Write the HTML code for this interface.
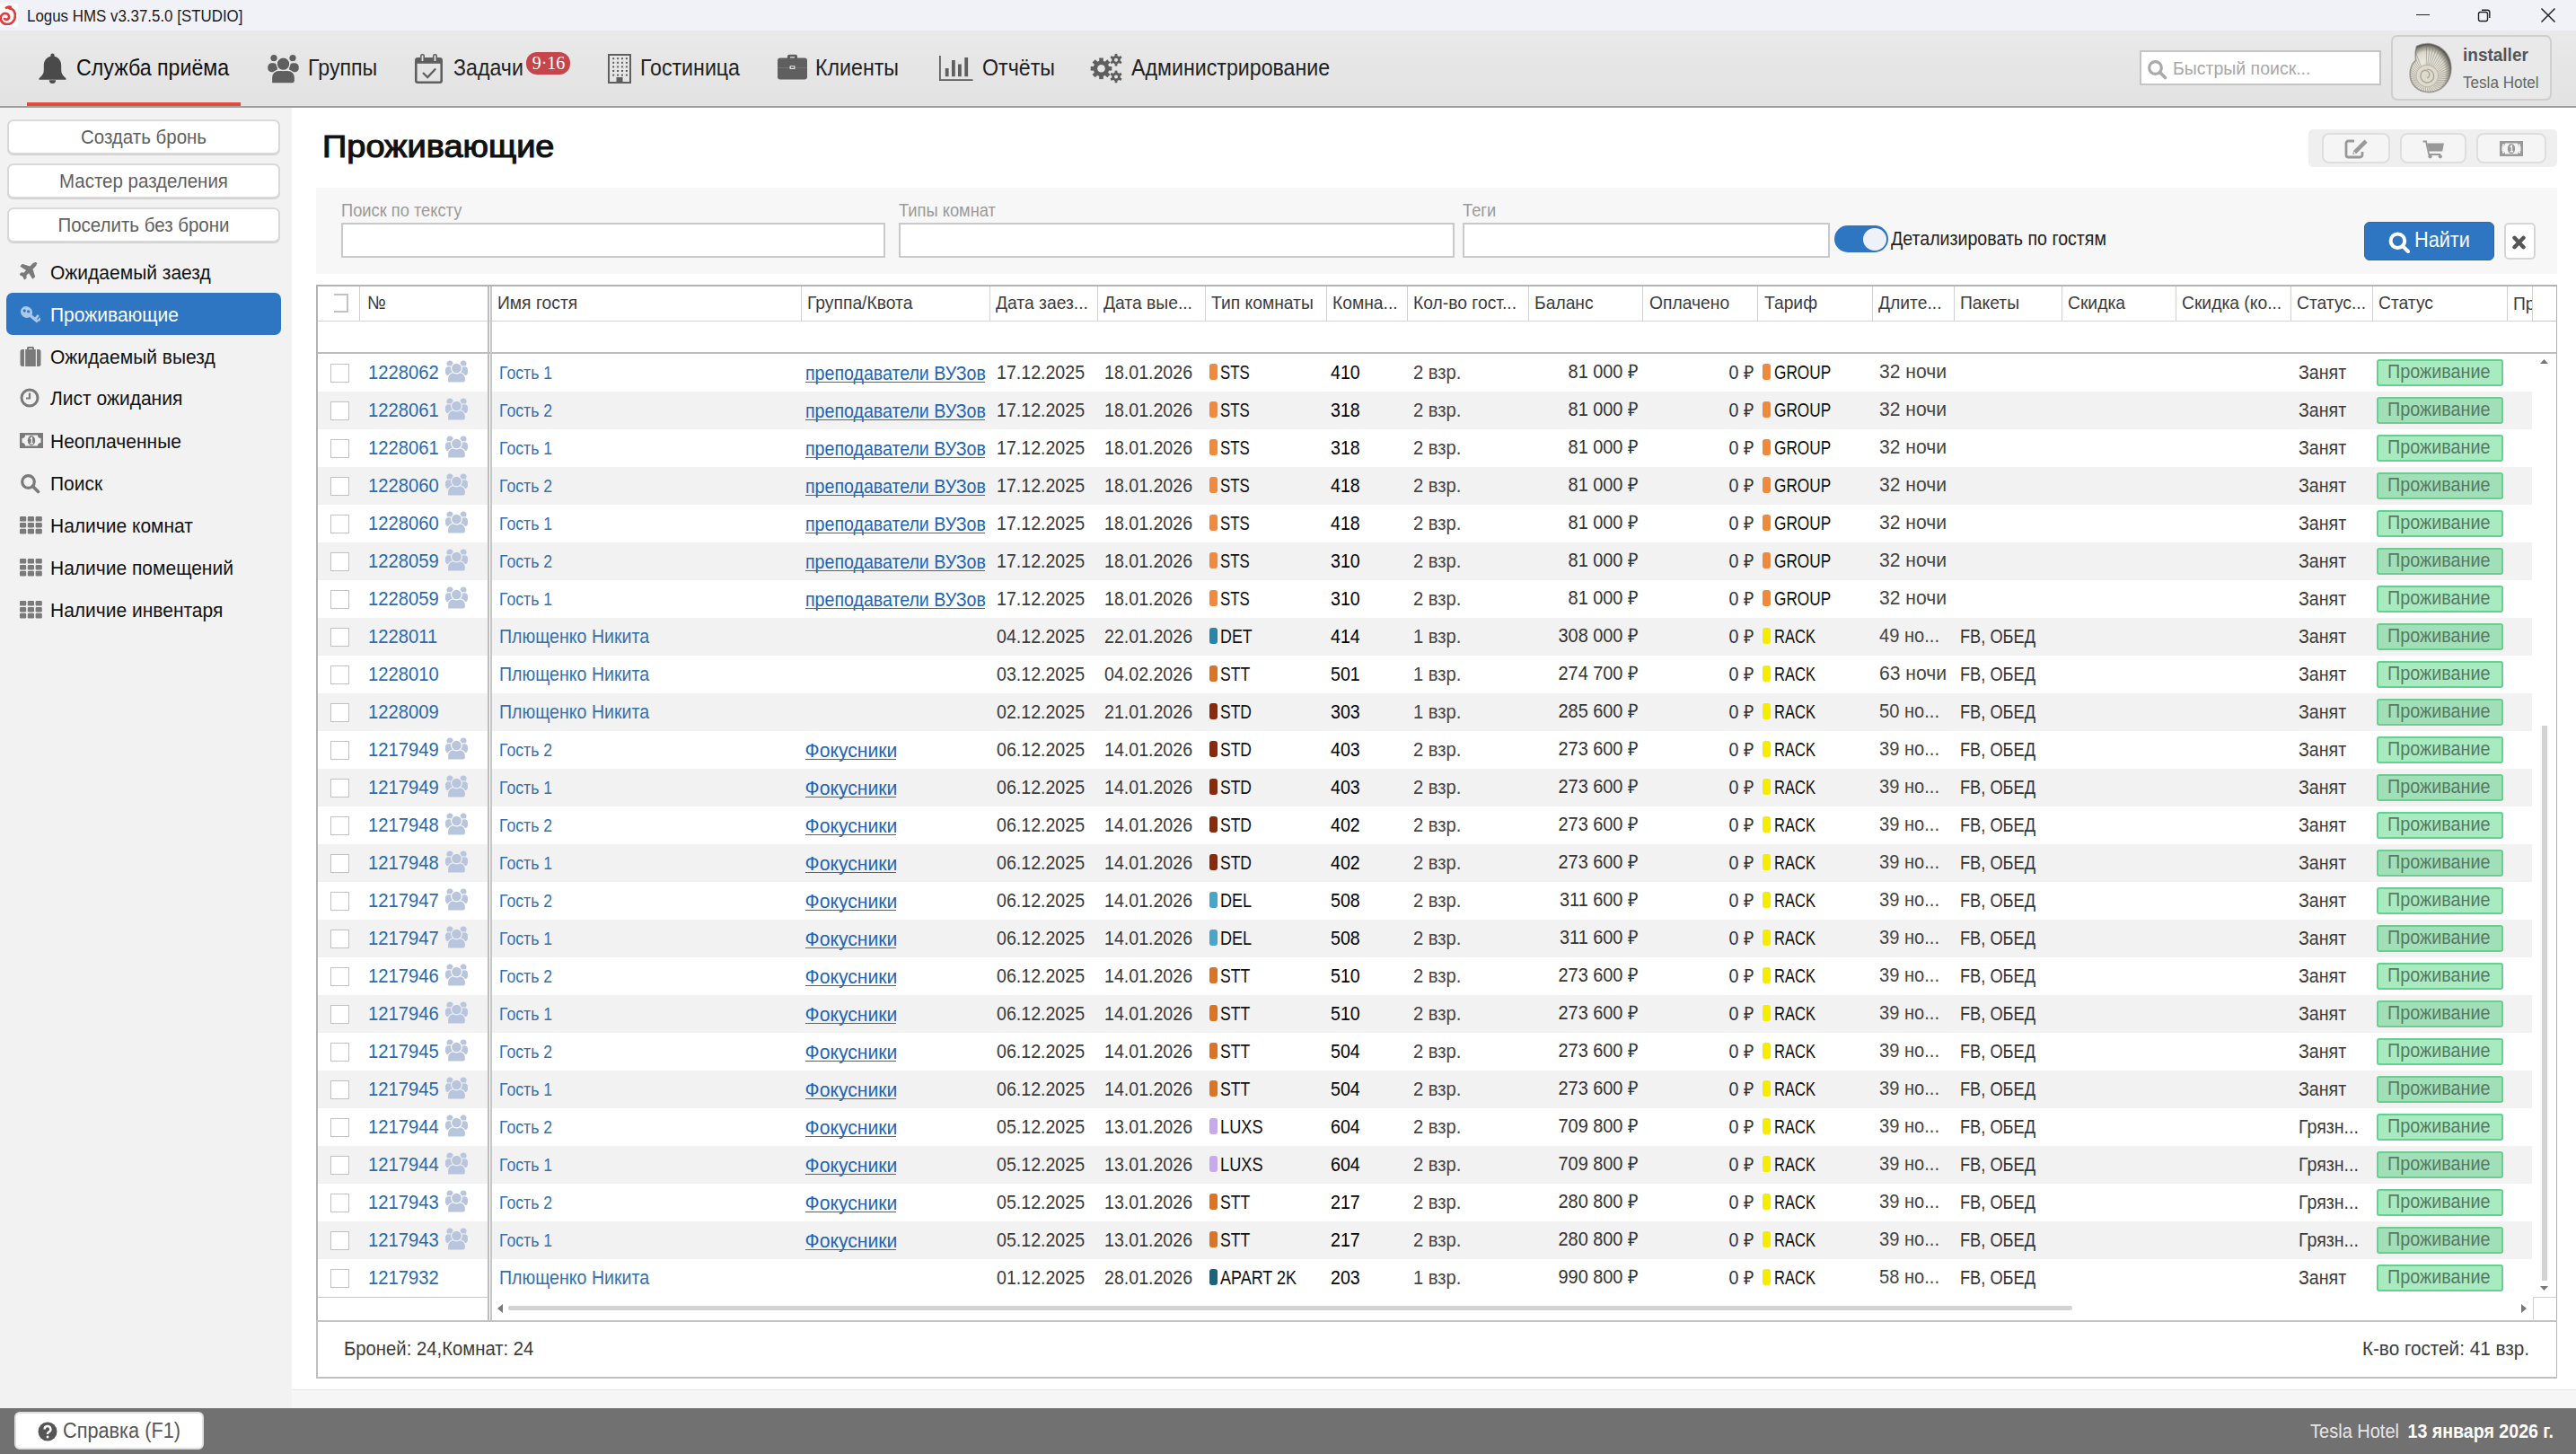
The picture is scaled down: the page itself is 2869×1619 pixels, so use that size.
<!DOCTYPE html>
<html><head><meta charset="utf-8"><title>Logus HMS</title>
<style>
html,body{margin:0;padding:0;}
body{width:2869px;height:1619px;position:relative;overflow:hidden;background:#fff;font-family:"Liberation Sans",sans-serif;}
.t{position:absolute;white-space:nowrap;line-height:1;}
.b{position:absolute;}
</style></head><body>
<div class="b" style="left:0.0px;top:0.0px;width:2869.0px;height:34.0px;background:#f0f2f8"></div>
<div class="b" style="left:0.0px;top:4.0px;width:20.0px;height:26.0px;background:#fbfbfd"></div>
<svg class="b" style="left:0.0px;top:6.0px" width="18" height="22" viewBox="0 0 18 22"><path d="M6 3.2c2-1.6 4.2-2 5.5-1.5l-.6 1.5c3.5.8 6 4 6 8.3 0 5.5-4 9.5-9 9.5C3.6 21 .8 18 .8 14.2c0-3 2.3-5.3 5.2-5.3 2.3 0 4 1.7 4 3.9 0 1.7-1.3 3-2.9 3-1.2 0-2.1-.9-2.1-2" fill="none" stroke="#e03a3a" stroke-width="2.6"/><path d="M5.5 2.5c2.8-1.5 6.5-1.2 8.2.6l-2.2 1.7z" fill="#e03a3a"/></svg>
<div class="t" style="left:29.5px;top:8.5px;font-size:18.25px;color:#1a1a1a;font-weight:400;transform:scaleX(0.9259);transform-origin:0 0;">Logus HMS v3.37.5.0 [STUDIO]</div>
<div class="b" style="left:2691.0px;top:16.0px;width:15.0px;height:1.0px;background:#222"></div>
<svg class="b" style="left:2758.0px;top:8.0px" width="20" height="18" viewBox="0 0 20 18"><rect x="2.5" y="5.5" width="10" height="10" rx="2" fill="none" stroke="#222" stroke-width="1.4"/><path d="M6 3.2h6.5a2.3 2.3 0 0 1 2.3 2.3V12" fill="none" stroke="#222" stroke-width="1.4"/></svg>
<svg class="b" style="left:2829.0px;top:8.0px" width="18" height="18" viewBox="0 0 18 18"><path d="M1.5 1.5L16.5 16.5M16.5 1.5L1.5 16.5" stroke="#222" stroke-width="1.5"/></svg>
<div class="b" style="left:0.0px;top:34.0px;width:2869.0px;height:84.0px;background:linear-gradient(#eaeaea,#e6e6e6 40%,#e3e3e3)"></div>
<div class="b" style="left:0.0px;top:118.0px;width:2869.0px;height:2.0px;background:#9f9f9f"></div>
<div class="b" style="left:30.0px;top:114.0px;width:238.0px;height:4.0px;background:#e24b3b"></div>
<svg class="b" style="left:43.0px;top:59.0px" width="31" height="34" viewBox="0 0 31 34"><path d="M15.5 0.5c1.2 0 2.1.9 2.1 2.1v1.2c4.6 1 7.6 5 7.6 10.2v5.6c0 3.2 1.7 5.6 5.3 8.6v1.6H0.5v-1.6c3.6-3 5.3-5.4 5.3-8.6v-5.6c0-5.2 3-9.2 7.6-10.2V2.6c0-1.2.9-2.1 2.1-2.1z" fill="#4a4a4a"/><path d="M11.8 30.2a3.7 3.7 0 0 0 7.4 0z" fill="#4a4a4a"/></svg>
<div class="t" style="left:85.0px;top:63.4px;font-size:25.06px;color:#111;font-weight:400;transform:scaleX(0.9259);transform-origin:0 0;">Служба приёма</div>
<svg class="b" style="left:297.0px;top:60.0px" width="37" height="34" viewBox="0 0 37 34"><g fill="#5f5f5f" stroke="#e6e6e6" stroke-width="1.3"><circle cx="8" cy="4.6" r="4.3"/><circle cx="29" cy="4.6" r="4.3"/><rect x="0.6" y="9.5" width="12" height="11.5" rx="5"/><rect x="24.4" y="9.5" width="12" height="11.5" rx="5"/><path d="M5.5 33V26c0-4.6 3.6-7.6 8-7.6h10c4.4 0 8 3 8 7.6v4c0 1.7-1.3 3-3 3z"/><circle cx="18.5" cy="11.2" r="7.3"/></g></svg>
<div class="t" style="left:342.5px;top:63.4px;font-size:25.06px;color:#222;font-weight:400;transform:scaleX(0.9259);transform-origin:0 0;">Группы</div>
<svg class="b" style="left:462.0px;top:59.0px" width="31" height="34" viewBox="0 0 31 34"><rect x="1.3" y="6.3" width="28.4" height="26.4" rx="2" fill="none" stroke="#5f5f5f" stroke-width="2.6"/><rect x="1.3" y="6.3" width="28.4" height="5.5" fill="#5f5f5f"/><rect x="6" y="1" width="5" height="9.5" rx="2.2" fill="#5f5f5f"/><rect x="20" y="1" width="5" height="9.5" rx="2.2" fill="#5f5f5f"/><rect x="7.6" y="2.6" width="1.8" height="6.4" fill="#e6e6e6"/><rect x="21.6" y="2.6" width="1.8" height="6.4" fill="#e6e6e6"/><path d="M9 22l5.2 5 9-9.5" fill="none" stroke="#5f5f5f" stroke-width="2.3"/></svg>
<div class="t" style="left:504.6px;top:63.4px;font-size:25.06px;color:#222;font-weight:400;transform:scaleX(0.9259);transform-origin:0 0;">Задачи</div>
<div class="b" style="left:586.0px;top:58.2px;width:49.0px;height:24.4px;background:#c6454a;border-radius:12px"></div>
<div class="t" style="left:580.5px;width:60px;text-align:center;top:59.5px;font-size:21.60px;color:#fff;font-weight:400;font-family:'Liberation Serif',serif;transform:scaleX(0.9259);transform-origin:50% 0;">9·16</div>
<svg class="b" style="left:677.0px;top:60.0px" width="26" height="33" viewBox="0 0 26 33"><path d="M1 1h24v31H1z" fill="none" stroke="#5f5f5f" stroke-width="2"/><rect x="5.2" y="4.2" width="2" height="2" fill="#5f5f5f"/><rect x="10.1" y="4.2" width="2" height="2" fill="#5f5f5f"/><rect x="15.0" y="4.2" width="2" height="2" fill="#5f5f5f"/><rect x="19.9" y="4.2" width="2" height="2" fill="#5f5f5f"/><rect x="5.2" y="8.8" width="2" height="2" fill="#5f5f5f"/><rect x="10.1" y="8.8" width="2" height="2" fill="#5f5f5f"/><rect x="15.0" y="8.8" width="2" height="2" fill="#5f5f5f"/><rect x="19.9" y="8.8" width="2" height="2" fill="#5f5f5f"/><rect x="5.2" y="13.4" width="2" height="2" fill="#5f5f5f"/><rect x="10.1" y="13.4" width="2" height="2" fill="#5f5f5f"/><rect x="15.0" y="13.4" width="2" height="2" fill="#5f5f5f"/><rect x="19.9" y="13.4" width="2" height="2" fill="#5f5f5f"/><rect x="5.2" y="18.0" width="2" height="2" fill="#5f5f5f"/><rect x="10.1" y="18.0" width="2" height="2" fill="#5f5f5f"/><rect x="15.0" y="18.0" width="2" height="2" fill="#5f5f5f"/><rect x="19.9" y="18.0" width="2" height="2" fill="#5f5f5f"/><rect x="5.2" y="22.6" width="2" height="2" fill="#5f5f5f"/><rect x="10.1" y="22.6" width="2" height="2" fill="#5f5f5f"/><rect x="15.0" y="22.6" width="2" height="2" fill="#5f5f5f"/><rect x="19.9" y="22.6" width="2" height="2" fill="#5f5f5f"/><rect x="9.5" y="26" width="7" height="6" fill="#5f5f5f"/></svg>
<div class="t" style="left:713.0px;top:63.4px;font-size:25.06px;color:#222;font-weight:400;transform:scaleX(0.9259);transform-origin:0 0;">Гостиница</div>
<svg class="b" style="left:866.0px;top:60.0px" width="33" height="29" viewBox="0 0 33 29"><path d="M11 5.5V2.6C11 1.5 11.9.8 13 .8h7c1.1 0 2 .7 2 1.8v2.9h-3V3.3h-5v2.2z" fill="#5f5f5f"/><rect x="0" y="4.6" width="33" height="24" rx="3" fill="#5f5f5f"/><path d="M0 15.5h33" stroke="#777" stroke-width="0.8"/><rect x="13.5" y="13.3" width="6" height="3.6" rx="0.6" fill="#e6e6e6"/><rect x="14.8" y="14.3" width="3.4" height="1.6" fill="#5f5f5f"/></svg>
<div class="t" style="left:908.0px;top:63.4px;font-size:25.06px;color:#222;font-weight:400;transform:scaleX(0.9259);transform-origin:0 0;">Клиенты</div>
<svg class="b" style="left:1046.0px;top:62.0px" width="38" height="28" viewBox="0 0 38 28"><g fill="#5f5f5f"><rect x="0" y="0" width="1.8" height="28"/><rect x="0" y="26.2" width="37.5" height="1.8"/><rect x="6.8" y="14" width="3.8" height="9.2"/><rect x="14" y="5" width="3.8" height="18.2"/><rect x="21" y="9.5" width="3.8" height="13.7"/><rect x="28.3" y="2" width="3.8" height="21.2"/></g></svg>
<div class="t" style="left:1093.8px;top:63.4px;font-size:25.06px;color:#222;font-weight:400;transform:scaleX(0.9259);transform-origin:0 0;">Отчёты</div>
<svg class="b" style="left:1213.0px;top:58.0px" width="38" height="36" viewBox="0 0 38 36"><circle cx="13.5" cy="18.3" r="8.8" fill="#5f5f5f"/><rect x="11.2" y="6.5" width="4.6" height="5" fill="#5f5f5f" transform="rotate(0.0 13.5 18.3)"/><rect x="11.2" y="6.5" width="4.6" height="5" fill="#5f5f5f" transform="rotate(45.0 13.5 18.3)"/><rect x="11.2" y="6.5" width="4.6" height="5" fill="#5f5f5f" transform="rotate(90.0 13.5 18.3)"/><rect x="11.2" y="6.5" width="4.6" height="5" fill="#5f5f5f" transform="rotate(135.0 13.5 18.3)"/><rect x="11.2" y="6.5" width="4.6" height="5" fill="#5f5f5f" transform="rotate(180.0 13.5 18.3)"/><rect x="11.2" y="6.5" width="4.6" height="5" fill="#5f5f5f" transform="rotate(225.0 13.5 18.3)"/><rect x="11.2" y="6.5" width="4.6" height="5" fill="#5f5f5f" transform="rotate(270.0 13.5 18.3)"/><rect x="11.2" y="6.5" width="4.6" height="5" fill="#5f5f5f" transform="rotate(315.0 13.5 18.3)"/><circle cx="13.5" cy="18.3" r="4.3" fill="#e6e6e6"/><circle cx="30" cy="8.7" r="4.8" fill="#5f5f5f"/><rect x="28.6" y="1.8999999999999995" width="2.8" height="4" fill="#5f5f5f" transform="rotate(0.0 30 8.7)"/><rect x="28.6" y="1.8999999999999995" width="2.8" height="4" fill="#5f5f5f" transform="rotate(60.0 30 8.7)"/><rect x="28.6" y="1.8999999999999995" width="2.8" height="4" fill="#5f5f5f" transform="rotate(120.0 30 8.7)"/><rect x="28.6" y="1.8999999999999995" width="2.8" height="4" fill="#5f5f5f" transform="rotate(180.0 30 8.7)"/><rect x="28.6" y="1.8999999999999995" width="2.8" height="4" fill="#5f5f5f" transform="rotate(240.0 30 8.7)"/><rect x="28.6" y="1.8999999999999995" width="2.8" height="4" fill="#5f5f5f" transform="rotate(300.0 30 8.7)"/><circle cx="30" cy="8.7" r="2" fill="#e6e6e6"/><circle cx="30" cy="27.4" r="4.8" fill="#5f5f5f"/><rect x="28.6" y="20.599999999999998" width="2.8" height="4" fill="#5f5f5f" transform="rotate(0.0 30 27.4)"/><rect x="28.6" y="20.599999999999998" width="2.8" height="4" fill="#5f5f5f" transform="rotate(60.0 30 27.4)"/><rect x="28.6" y="20.599999999999998" width="2.8" height="4" fill="#5f5f5f" transform="rotate(120.0 30 27.4)"/><rect x="28.6" y="20.599999999999998" width="2.8" height="4" fill="#5f5f5f" transform="rotate(180.0 30 27.4)"/><rect x="28.6" y="20.599999999999998" width="2.8" height="4" fill="#5f5f5f" transform="rotate(240.0 30 27.4)"/><rect x="28.6" y="20.599999999999998" width="2.8" height="4" fill="#5f5f5f" transform="rotate(300.0 30 27.4)"/><circle cx="30" cy="27.4" r="2" fill="#e6e6e6"/></svg>
<div class="t" style="left:1259.5px;top:63.4px;font-size:25.06px;color:#222;font-weight:400;transform:scaleX(0.9259);transform-origin:0 0;">Администрирование</div>
<div class="b" style="left:2383.0px;top:56.0px;width:269.0px;height:39.0px;background:#fff;border:2px solid #c4c4c4;box-sizing:border-box"></div>
<svg class="b" style="left:2391.0px;top:66.0px" width="23" height="23" viewBox="0 0 23 23"><circle cx="9.5" cy="9.5" r="6.8" fill="none" stroke="#aaa" stroke-width="3.2"/><path d="M14.5 14.5l6 6" stroke="#aaa" stroke-width="3.6" stroke-linecap="round"/></svg>
<div class="t" style="left:2420.0px;top:65.0px;font-size:21.06px;color:#a8a8a8;font-weight:400;transform:scaleX(0.9259);transform-origin:0 0;">Быстрый поиск...</div>
<div class="b" style="left:2663.0px;top:39.0px;width:179.0px;height:73.0px;background:#e9e9e9;border:2px solid #cfcfcf;border-radius:7px;box-sizing:border-box"></div>
<svg class="b" style="left:2682.0px;top:45.0px" width="51" height="60" viewBox="0 0 48 56"><defs><radialGradient id="ag" cx="42%" cy="60%" r="60%"><stop offset="0" stop-color="#d6d1c3"/><stop offset="0.4" stop-color="#ece9df"/><stop offset="0.72" stop-color="#dcd9cf"/><stop offset="0.9" stop-color="#8f8c84"/><stop offset="1" stop-color="#4a4843"/></radialGradient><clipPath id="ac"><path d="M9 6c6-3 14-3.5 20-1 10 4 16 13 16 24 0 14-10 25-23 25C10 54 2 46 2 35c0-6 2-11 6-14.5C7.5 15 7.5 10 9 6z"/></clipPath></defs><path d="M9 6c6-3 14-3.5 20-1 10 4 16 13 16 24 0 14-10 25-23 25C10 54 2 46 2 35c0-6 2-11 6-14.5C7.5 15 7.5 10 9 6z" fill="url(#ag)" stroke="#6a675f" stroke-width="1.6" stroke-opacity="0.55"/><g clip-path="url(#ac)"><line x1="19.0" y1="25.0" x2="19.4" y2="3.1" stroke="#7d7a70" stroke-width="0.9" opacity="0.5"/><line x1="20.5" y1="25.0" x2="23.3" y2="3.0" stroke="#7d7a70" stroke-width="0.9" opacity="0.5"/><line x1="22.0" y1="25.2" x2="27.1" y2="3.4" stroke="#7d7a70" stroke-width="0.9" opacity="0.5"/><line x1="23.5" y1="25.5" x2="30.9" y2="4.2" stroke="#7d7a70" stroke-width="0.9" opacity="0.5"/><line x1="25.0" y1="26.1" x2="34.5" y2="5.5" stroke="#7d7a70" stroke-width="0.9" opacity="0.5"/><line x1="26.4" y1="26.8" x2="37.9" y2="7.2" stroke="#7d7a70" stroke-width="0.9" opacity="0.5"/><line x1="27.6" y1="27.7" x2="41.0" y2="9.3" stroke="#7d7a70" stroke-width="0.9" opacity="0.5"/><line x1="28.7" y1="28.8" x2="43.8" y2="11.8" stroke="#7d7a70" stroke-width="0.9" opacity="0.5"/><line x1="29.7" y1="30.0" x2="46.3" y2="14.6" stroke="#7d7a70" stroke-width="0.9" opacity="0.5"/><line x1="30.5" y1="31.3" x2="48.4" y2="17.6" stroke="#7d7a70" stroke-width="0.9" opacity="0.5"/><line x1="31.2" y1="32.7" x2="50.0" y2="20.9" stroke="#7d7a70" stroke-width="0.9" opacity="0.5"/><line x1="31.7" y1="34.2" x2="51.1" y2="24.4" stroke="#7d7a70" stroke-width="0.9" opacity="0.5"/><line x1="31.9" y1="35.7" x2="51.8" y2="27.9" stroke="#7d7a70" stroke-width="0.9" opacity="0.5"/><line x1="32.0" y1="37.2" x2="52.0" y2="31.5" stroke="#7d7a70" stroke-width="0.9" opacity="0.5"/><line x1="31.9" y1="38.8" x2="51.7" y2="35.1" stroke="#7d7a70" stroke-width="0.9" opacity="0.5"/><line x1="31.5" y1="40.3" x2="50.9" y2="38.7" stroke="#7d7a70" stroke-width="0.9" opacity="0.5"/><line x1="31.0" y1="41.7" x2="49.6" y2="42.1" stroke="#7d7a70" stroke-width="0.9" opacity="0.5"/><line x1="30.3" y1="43.1" x2="47.8" y2="45.3" stroke="#7d7a70" stroke-width="0.9" opacity="0.5"/><line x1="29.5" y1="44.4" x2="45.6" y2="48.3" stroke="#7d7a70" stroke-width="0.9" opacity="0.5"/><line x1="28.4" y1="45.5" x2="43.1" y2="50.9" stroke="#7d7a70" stroke-width="0.9" opacity="0.5"/><line x1="27.3" y1="46.6" x2="40.1" y2="53.3" stroke="#7d7a70" stroke-width="0.9" opacity="0.5"/><line x1="26.0" y1="47.4" x2="36.9" y2="55.3" stroke="#7d7a70" stroke-width="0.9" opacity="0.5"/><line x1="24.6" y1="48.1" x2="33.4" y2="56.9" stroke="#7d7a70" stroke-width="0.9" opacity="0.5"/><line x1="23.1" y1="48.6" x2="29.8" y2="58.0" stroke="#7d7a70" stroke-width="0.9" opacity="0.5"/><line x1="21.6" y1="48.9" x2="26.0" y2="58.8" stroke="#7d7a70" stroke-width="0.9" opacity="0.5"/><line x1="20.0" y1="49.0" x2="22.1" y2="59.0" stroke="#7d7a70" stroke-width="0.9" opacity="0.5"/><line x1="18.5" y1="48.9" x2="18.3" y2="58.8" stroke="#7d7a70" stroke-width="0.9" opacity="0.5"/><line x1="17.0" y1="48.6" x2="14.5" y2="58.1" stroke="#7d7a70" stroke-width="0.9" opacity="0.5"/><line x1="15.5" y1="48.1" x2="10.8" y2="57.0" stroke="#7d7a70" stroke-width="0.9" opacity="0.5"/><line x1="14.1" y1="47.5" x2="7.3" y2="55.4" stroke="#7d7a70" stroke-width="0.9" opacity="0.5"/><line x1="12.8" y1="46.6" x2="4.1" y2="53.4" stroke="#7d7a70" stroke-width="0.9" opacity="0.5"/><line x1="11.6" y1="45.6" x2="1.1" y2="51.1" stroke="#7d7a70" stroke-width="0.9" opacity="0.5"/><line x1="10.6" y1="44.5" x2="-1.5" y2="48.4" stroke="#7d7a70" stroke-width="0.9" opacity="0.5"/><line x1="9.7" y1="43.2" x2="-3.7" y2="45.5" stroke="#7d7a70" stroke-width="0.9" opacity="0.5"/><line x1="9.0" y1="41.8" x2="-5.5" y2="42.3" stroke="#7d7a70" stroke-width="0.9" opacity="0.5"/><line x1="8.5" y1="40.4" x2="-6.8" y2="38.9" stroke="#7d7a70" stroke-width="0.9" opacity="0.5"/><line x1="8.1" y1="38.9" x2="-7.6" y2="35.3" stroke="#7d7a70" stroke-width="0.9" opacity="0.5"/><line x1="8.0" y1="37.3" x2="-8.0" y2="31.7" stroke="#7d7a70" stroke-width="0.9" opacity="0.5"/><line x1="8.1" y1="35.8" x2="-7.8" y2="28.1" stroke="#7d7a70" stroke-width="0.9" opacity="0.5"/><line x1="8.3" y1="34.2" x2="-7.2" y2="24.6" stroke="#7d7a70" stroke-width="0.9" opacity="0.5"/><line x1="8.8" y1="32.8" x2="-6.1" y2="21.1" stroke="#7d7a70" stroke-width="0.9" opacity="0.5"/><line x1="9.4" y1="31.4" x2="-4.5" y2="17.8" stroke="#7d7a70" stroke-width="0.9" opacity="0.5"/><line x1="10.2" y1="30.0" x2="-2.4" y2="14.8" stroke="#7d7a70" stroke-width="0.9" opacity="0.5"/><line x1="11.2" y1="28.8" x2="-0.0" y2="12.0" stroke="#7d7a70" stroke-width="0.9" opacity="0.5"/><line x1="12.3" y1="27.8" x2="2.8" y2="9.5" stroke="#7d7a70" stroke-width="0.9" opacity="0.5"/><line x1="13.6" y1="26.9" x2="5.9" y2="7.4" stroke="#7d7a70" stroke-width="0.9" opacity="0.5"/></g><circle cx="20" cy="37" r="11.5" fill="#dedacd" opacity="0.9"/><circle cx="20" cy="37" r="11.5" fill="none" stroke="#b9b5a8" stroke-width="1"/><path d="M20 30a7 7 0 1 1-6.5 4.5a4.5 4.5 0 1 1 6.5 5" fill="none" stroke="#a9a598" stroke-width="1.3"/></svg>
<div class="t" style="left:2743.0px;top:51.1px;font-size:20.52px;color:#555;font-weight:700;transform:scaleX(0.9259);transform-origin:0 0;">installer</div>
<div class="t" style="left:2743.0px;top:82.7px;font-size:18.47px;color:#666;font-weight:400;transform:scaleX(0.9259);transform-origin:0 0;">Tesla Hotel</div>
<div class="b" style="left:0.0px;top:120.0px;width:325.0px;height:1448.0px;background:#f2f2f2"></div>
<div class="b" style="left:8.0px;top:132.5px;width:304.0px;height:39.0px;background:#fff;border:2px solid #d9d9d9;border-radius:7px;box-sizing:border-box;box-shadow:0 1px 0 #cfcfcf"></div>
<div class="t" style="left:10.0px;width:300px;text-align:center;top:141.9px;font-size:22.14px;color:#5f5f5f;font-weight:400;transform:scaleX(0.9259);transform-origin:50% 0;">Создать бронь</div>
<div class="b" style="left:8.0px;top:181.5px;width:304.0px;height:39.0px;background:#fff;border:2px solid #d9d9d9;border-radius:7px;box-sizing:border-box;box-shadow:0 1px 0 #cfcfcf"></div>
<div class="t" style="left:10.0px;width:300px;text-align:center;top:190.9px;font-size:22.14px;color:#5f5f5f;font-weight:400;transform:scaleX(0.9259);transform-origin:50% 0;">Мастер разделения</div>
<div class="b" style="left:8.0px;top:231.0px;width:304.0px;height:39.0px;background:#fff;border:2px solid #d9d9d9;border-radius:7px;box-sizing:border-box;box-shadow:0 1px 0 #cfcfcf"></div>
<div class="t" style="left:10.0px;width:300px;text-align:center;top:240.3px;font-size:22.14px;color:#5f5f5f;font-weight:400;transform:scaleX(0.9259);transform-origin:50% 0;">Поселить без брони</div>
<div class="b" style="left:7.0px;top:326.0px;width:306.0px;height:47.0px;background:#2e76c1;border-radius:7px"></div>
<div class="t" style="left:55.7px;top:292.3px;font-size:22.68px;color:#111;font-weight:400;transform:scaleX(0.9259);transform-origin:0 0;">Ожидаемый заезд</div>
<svg class="b" style="left:22.0px;top:292.0px" width="20" height="20" viewBox="0 0 20 20"><path d="M18.6 1.4c-.9-.9-2.6-.5-3.8.7L11.6 5.3 3.2 2.6 1.3 4.5l6.9 4.3-3.5 3.6-2.6-.4L.4 13.7l3.4 1.6 1.6 3.4L7 17l-.4-2.6 3.6-3.5 4.3 6.9 1.9-1.9-2.7-8.4 3.2-3.2c1.2-1.2 1.6-2.9.7-3.8z" fill="#7a7a7a" stroke="#7a7a7a" stroke-width="1.4" stroke-linejoin="round"/></svg>
<div class="t" style="left:55.7px;top:338.8px;font-size:22.68px;color:#fff;font-weight:400;transform:scaleX(0.9259);transform-origin:0 0;">Проживающие</div>
<svg class="b" style="left:21.0px;top:338.5px" width="24" height="24" viewBox="0 0 24 24"><g transform="rotate(40 8.5 8.5)"><ellipse cx="8.5" cy="8.5" rx="6.8" ry="6.3" fill="#a9c8ea"/><rect x="13" y="6.9" width="12" height="3.4" fill="#a9c8ea"/><rect x="19.5" y="2.6" width="2.8" height="5" fill="#a9c8ea"/><rect x="23.5" y="3.6" width="2.6" height="4" fill="#a9c8ea"/><circle cx="5.8" cy="8.8" r="1.6" fill="#2e76c1"/><circle cx="9.8" cy="6.6" r="1.6" fill="#2e76c1"/></g></svg>
<div class="t" style="left:55.7px;top:385.8px;font-size:22.68px;color:#111;font-weight:400;transform:scaleX(0.9259);transform-origin:0 0;">Ожидаемый выезд</div>
<svg class="b" style="left:22.0px;top:384.5px" width="24" height="23" viewBox="0 0 24 23"><path d="M8 4V2.5C8 1.5 8.8 1 9.5 1h5c.8 0 1.5.5 1.5 1.5V4h-2V3h-4v1z" fill="#7a7a7a"/><rect x="0.5" y="4" width="23" height="19" rx="2.5" fill="#7a7a7a"/><rect x="5" y="4" width="1.2" height="19" fill="#f2f2f2"/><rect x="17.8" y="4" width="1.2" height="19" fill="#f2f2f2"/></svg>
<div class="t" style="left:55.7px;top:432.3px;font-size:22.68px;color:#111;font-weight:400;transform:scaleX(0.9259);transform-origin:0 0;">Лист ожидания</div>
<svg class="b" style="left:22.0px;top:432.0px" width="22" height="22" viewBox="0 0 22 22"><circle cx="11" cy="11" r="9" fill="none" stroke="#7a7a7a" stroke-width="3"/><path d="M11 5.5V11.5H7" fill="none" stroke="#7a7a7a" stroke-width="2.2"/></svg>
<div class="t" style="left:55.7px;top:479.8px;font-size:22.68px;color:#111;font-weight:400;transform:scaleX(0.9259);transform-origin:0 0;">Неоплаченные</div>
<svg class="b" style="left:22.0px;top:482.0px" width="26" height="17" viewBox="0 0 26 17"><rect x="0" y="0" width="26" height="17" fill="#7a7a7a"/><path d="M6 2.5h14a3.5 3.5 0 0 0 3.5 3.5v5a3.5 3.5 0 0 0-3.5 3.5H6A3.5 3.5 0 0 0 2.5 11V6A3.5 3.5 0 0 0 6 2.5z" fill="#f2f2f2"/><ellipse cx="13" cy="8.5" rx="4.2" ry="5.4" fill="#7a7a7a"/><path d="M11.6 6.6l1.8-1.2v6.4M11.6 11.8h3.4" stroke="#f2f2f2" stroke-width="1.4" fill="none"/></svg>
<div class="t" style="left:55.7px;top:526.8px;font-size:22.68px;color:#111;font-weight:400;transform:scaleX(0.9259);transform-origin:0 0;">Поиск</div>
<svg class="b" style="left:22.0px;top:526.5px" width="23" height="23" viewBox="0 0 23 23"><circle cx="9.5" cy="9.5" r="6.8" fill="none" stroke="#7a7a7a" stroke-width="3.2"/><path d="M14.5 14.5l6 6" stroke="#7a7a7a" stroke-width="3.6" stroke-linecap="round"/></svg>
<div class="t" style="left:55.7px;top:573.8px;font-size:22.68px;color:#111;font-weight:400;transform:scaleX(0.9259);transform-origin:0 0;">Наличие комнат</div>
<svg class="b" style="left:22.0px;top:574.5px" width="25" height="20" viewBox="0 0 25 20"><rect x="0.0" y="0.0" width="7.2" height="5.6" rx="1.2" fill="#7a7a7a"/><rect x="8.8" y="0.0" width="7.2" height="5.6" rx="1.2" fill="#7a7a7a"/><rect x="17.6" y="0.0" width="7.2" height="5.6" rx="1.2" fill="#7a7a7a"/><rect x="0.0" y="6.9" width="7.2" height="5.6" rx="1.2" fill="#7a7a7a"/><rect x="8.8" y="6.9" width="7.2" height="5.6" rx="1.2" fill="#7a7a7a"/><rect x="17.6" y="6.9" width="7.2" height="5.6" rx="1.2" fill="#7a7a7a"/><rect x="0.0" y="13.8" width="7.2" height="5.6" rx="1.2" fill="#7a7a7a"/><rect x="8.8" y="13.8" width="7.2" height="5.6" rx="1.2" fill="#7a7a7a"/><rect x="17.6" y="13.8" width="7.2" height="5.6" rx="1.2" fill="#7a7a7a"/></svg>
<div class="t" style="left:55.7px;top:620.8px;font-size:22.68px;color:#111;font-weight:400;transform:scaleX(0.9259);transform-origin:0 0;">Наличие помещений</div>
<svg class="b" style="left:22.0px;top:621.5px" width="25" height="20" viewBox="0 0 25 20"><rect x="0.0" y="0.0" width="7.2" height="5.6" rx="1.2" fill="#7a7a7a"/><rect x="8.8" y="0.0" width="7.2" height="5.6" rx="1.2" fill="#7a7a7a"/><rect x="17.6" y="0.0" width="7.2" height="5.6" rx="1.2" fill="#7a7a7a"/><rect x="0.0" y="6.9" width="7.2" height="5.6" rx="1.2" fill="#7a7a7a"/><rect x="8.8" y="6.9" width="7.2" height="5.6" rx="1.2" fill="#7a7a7a"/><rect x="17.6" y="6.9" width="7.2" height="5.6" rx="1.2" fill="#7a7a7a"/><rect x="0.0" y="13.8" width="7.2" height="5.6" rx="1.2" fill="#7a7a7a"/><rect x="8.8" y="13.8" width="7.2" height="5.6" rx="1.2" fill="#7a7a7a"/><rect x="17.6" y="13.8" width="7.2" height="5.6" rx="1.2" fill="#7a7a7a"/></svg>
<div class="t" style="left:55.7px;top:667.8px;font-size:22.68px;color:#111;font-weight:400;transform:scaleX(0.9259);transform-origin:0 0;">Наличие инвентаря</div>
<svg class="b" style="left:22.0px;top:668.5px" width="25" height="20" viewBox="0 0 25 20"><rect x="0.0" y="0.0" width="7.2" height="5.6" rx="1.2" fill="#7a7a7a"/><rect x="8.8" y="0.0" width="7.2" height="5.6" rx="1.2" fill="#7a7a7a"/><rect x="17.6" y="0.0" width="7.2" height="5.6" rx="1.2" fill="#7a7a7a"/><rect x="0.0" y="6.9" width="7.2" height="5.6" rx="1.2" fill="#7a7a7a"/><rect x="8.8" y="6.9" width="7.2" height="5.6" rx="1.2" fill="#7a7a7a"/><rect x="17.6" y="6.9" width="7.2" height="5.6" rx="1.2" fill="#7a7a7a"/><rect x="0.0" y="13.8" width="7.2" height="5.6" rx="1.2" fill="#7a7a7a"/><rect x="8.8" y="13.8" width="7.2" height="5.6" rx="1.2" fill="#7a7a7a"/><rect x="17.6" y="13.8" width="7.2" height="5.6" rx="1.2" fill="#7a7a7a"/></svg>
<div class="b" style="left:325.0px;top:120.0px;width:2544.0px;height:1428.0px;background:#fff"></div>
<div class="b" style="left:325.0px;top:1547.0px;width:2544.0px;height:1.0px;background:#e6e6e6"></div>
<div class="b" style="left:325.0px;top:1548.0px;width:2544.0px;height:20.0px;background:#f6f6f6"></div>
<div class="t" style="left:359.0px;top:146.1px;font-size:34.58px;color:#111;font-weight:400;-webkit-text-stroke:1.1px #111;transform:scaleX(1.0975);transform-origin:0 0;">Проживающие</div>
<div class="b" style="left:2571.0px;top:144.0px;width:277.0px;height:42.0px;background:#efefef;border-radius:5px"></div>
<div class="b" style="left:2586.0px;top:148.0px;width:76.0px;height:34.0px;background:#f5f5f5;border:2px solid #dedede;border-radius:8px;box-sizing:border-box"></div>
<div class="b" style="left:2673.0px;top:148.0px;width:74.0px;height:34.0px;background:#f5f5f5;border:2px solid #dedede;border-radius:8px;box-sizing:border-box"></div>
<div class="b" style="left:2758.0px;top:148.0px;width:78.0px;height:34.0px;background:#f5f5f5;border:2px solid #dedede;border-radius:8px;box-sizing:border-box"></div>
<svg class="b" style="left:2610.0px;top:153.0px" width="30" height="24" viewBox="0 0 30 24"><path d="M12 4H5.5A2.5 2.5 0 0 0 3 6.5v13A2.5 2.5 0 0 0 5.5 22h13a2.5 2.5 0 0 0 2.5-2.5V16" fill="none" stroke="#999" stroke-width="2.8"/><path d="M23.5 2.5l3.2 3.2-12 12-4.6 1.4 1.4-4.6z" fill="#999"/><path d="M11.6 16.4l1.6 1.6" stroke="#f5f5f5" stroke-width="1.2"/></svg>
<svg class="b" style="left:2698.0px;top:156.0px" width="25" height="21" viewBox="0 0 25 21"><path d="M0.5 1.5h3.5l3.2 14.5h13" fill="none" stroke="#999" stroke-width="1.8"/><path d="M5.2 3.5H24l-1.8 9H7.2z" fill="#999"/><circle cx="8.5" cy="18.3" r="2.1" fill="#999"/><circle cx="19.8" cy="18.3" r="2.1" fill="#999"/></svg>
<svg class="b" style="left:2784.0px;top:157.0px" width="26" height="17" viewBox="0 0 26 17"><rect x="0" y="0" width="26" height="17" fill="#999"/><path d="M3 3.5h2.5a3 3 0 0 1-2.5 2.5zM23 3.5h-2.5a3 3 0 0 0 2.5 2.5zM3 13.5h2.5a3 3 0 0 0-2.5-2.5zM23 13.5h-2.5a3 3 0 0 1 2.5-2.5z" fill="#f5f5f5"/><path d="M6 2.5h14a3.5 3.5 0 0 0 3.5 3.5v5a3.5 3.5 0 0 0-3.5 3.5H6A3.5 3.5 0 0 0 2.5 11V6A3.5 3.5 0 0 0 6 2.5z" fill="#f5f5f5"/><ellipse cx="13" cy="8.5" rx="4.2" ry="5.6" fill="#999"/><path d="M11.6 6.6l1.8-1.2v6.4M11.6 11.8h3.4" stroke="#f5f5f5" stroke-width="1.4" fill="none"/></svg>
<div class="b" style="left:352.0px;top:209.0px;width:2496.0px;height:96.0px;background:#f7f7f7"></div>
<div class="t" style="left:380.0px;top:225.3px;font-size:19.76px;color:#9a9a9a;font-weight:400;transform:scaleX(0.9259);transform-origin:0 0;">Поиск по тексту</div>
<div class="t" style="left:1001.0px;top:225.3px;font-size:19.76px;color:#9a9a9a;font-weight:400;transform:scaleX(0.9259);transform-origin:0 0;">Типы комнат</div>
<div class="t" style="left:1629.0px;top:225.3px;font-size:19.76px;color:#9a9a9a;font-weight:400;transform:scaleX(0.9259);transform-origin:0 0;">Теги</div>
<div class="b" style="left:380.0px;top:247.5px;width:606.0px;height:39.0px;background:#fff;border:2px solid #c9c9c9;box-sizing:border-box"></div>
<div class="b" style="left:1001.0px;top:247.5px;width:619.0px;height:39.0px;background:#fff;border:2px solid #c9c9c9;box-sizing:border-box"></div>
<div class="b" style="left:1629.0px;top:247.5px;width:409.0px;height:39.0px;background:#fff;border:2px solid #c9c9c9;box-sizing:border-box"></div>
<div class="b" style="left:2043.0px;top:251.0px;width:60.0px;height:30.0px;background:#2e76c1;border-radius:15px"></div>
<div class="b" style="left:2075.0px;top:253.5px;width:25.5px;height:25.0px;background:#eef2f8;border-radius:50%"></div>
<div class="t" style="left:2106.0px;top:255.1px;font-size:21.17px;color:#222;font-weight:400;transform:scaleX(0.9259);transform-origin:0 0;">Детализировать по гостям</div>
<div class="b" style="left:2633.0px;top:247.0px;width:145.0px;height:42.5px;background:#2e76c1;border:1px solid #2a68aa;box-sizing:border-box;border-radius:6px"></div>
<svg class="b" style="left:2659.0px;top:257.0px" width="26" height="26" viewBox="0 0 26 26"><circle cx="11.4" cy="11.2" r="7.8" fill="none" stroke="#fff" stroke-width="4"/><path d="M17 17l6 6" stroke="#fff" stroke-width="4" stroke-linecap="round"/></svg>
<div class="t" style="left:2689.0px;top:256.2px;font-size:23.44px;color:#fff;font-weight:400;transform:scaleX(0.9259);transform-origin:0 0;">Найти</div>
<div class="b" style="left:2789.0px;top:248.0px;width:35.0px;height:40.5px;background:#fff;border:2px solid #d6d6d6;border-radius:5px;box-sizing:border-box"></div>
<svg class="b" style="left:2798.0px;top:262.0px" width="15" height="16" viewBox="0 0 15 16"><path d="M2.5 2.8l10 10.4M12.5 2.8l-10 10.4" stroke="#555" stroke-width="4.4" stroke-linecap="round"/></svg>
<div class="b" style="left:352.0px;top:317.0px;width:2496.0px;height:2.0px;background:#b3b3b3"></div>
<div class="b" style="left:352.0px;top:317.0px;width:2.0px;height:1155.0px;background:#b3b3b3"></div>
<div class="b" style="left:2847.0px;top:317.0px;width:1.0px;height:1155.0px;background:#b0b0b0"></div>
<div class="b" style="left:354.0px;top:357.0px;width:2466.0px;height:1.0px;background:#d6d6d6"></div>
<div class="b" style="left:2820.0px;top:357.0px;width:27.0px;height:1.0px;background:#c8c8c8"></div>
<div class="b" style="left:354.0px;top:392.0px;width:2493.0px;height:2.0px;background:#bdbdbd"></div>
<div class="b" style="left:400.0px;top:319.0px;width:1.0px;height:38.0px;background:#d2d2d2"></div>
<div class="b" style="left:892.0px;top:319.0px;width:1.0px;height:38.0px;background:#d2d2d2"></div>
<div class="b" style="left:1102.0px;top:319.0px;width:1.0px;height:38.0px;background:#d2d2d2"></div>
<div class="b" style="left:1222.0px;top:319.0px;width:1.0px;height:38.0px;background:#d2d2d2"></div>
<div class="b" style="left:1342.0px;top:319.0px;width:1.0px;height:38.0px;background:#d2d2d2"></div>
<div class="b" style="left:1477.0px;top:319.0px;width:1.0px;height:38.0px;background:#d2d2d2"></div>
<div class="b" style="left:1567.0px;top:319.0px;width:1.0px;height:38.0px;background:#d2d2d2"></div>
<div class="b" style="left:1702.0px;top:319.0px;width:1.0px;height:38.0px;background:#d2d2d2"></div>
<div class="b" style="left:1829.0px;top:319.0px;width:1.0px;height:38.0px;background:#d2d2d2"></div>
<div class="b" style="left:1957.0px;top:319.0px;width:1.0px;height:38.0px;background:#d2d2d2"></div>
<div class="b" style="left:2085.0px;top:319.0px;width:1.0px;height:38.0px;background:#d2d2d2"></div>
<div class="b" style="left:2176.0px;top:319.0px;width:1.0px;height:38.0px;background:#d2d2d2"></div>
<div class="b" style="left:2296.0px;top:319.0px;width:1.0px;height:38.0px;background:#d2d2d2"></div>
<div class="b" style="left:2423.0px;top:319.0px;width:1.0px;height:38.0px;background:#d2d2d2"></div>
<div class="b" style="left:2551.0px;top:319.0px;width:1.0px;height:38.0px;background:#d2d2d2"></div>
<div class="b" style="left:2642.0px;top:319.0px;width:1.0px;height:38.0px;background:#d2d2d2"></div>
<div class="b" style="left:2792.0px;top:319.0px;width:1.0px;height:38.0px;background:#d2d2d2"></div>
<div class="b" style="left:2820.0px;top:319.0px;width:1.0px;height:38.0px;background:#d2d2d2"></div>
<div class="b" style="left:543.0px;top:319.0px;width:2.0px;height:1151.0px;background:#bdbdbd"></div>
<div class="b" style="left:546.0px;top:319.0px;width:2.0px;height:1151.0px;background:#c6c6c6"></div>
<div class="t" style="left:408.5px;top:327.4px;font-size:20.84px;color:#3c3c3c;font-weight:400;transform:scaleX(0.9259);transform-origin:0 0;">№</div>
<div class="t" style="left:554.0px;top:327.4px;font-size:20.84px;color:#3c3c3c;font-weight:400;transform:scaleX(0.9259);transform-origin:0 0;">Имя гостя</div>
<div class="t" style="left:899.0px;top:327.4px;font-size:20.84px;color:#3c3c3c;font-weight:400;transform:scaleX(0.9259);transform-origin:0 0;">Группа/Квота</div>
<div class="t" style="left:1108.5px;top:327.4px;font-size:20.84px;color:#3c3c3c;font-weight:400;transform:scaleX(0.9259);transform-origin:0 0;">Дата заез...</div>
<div class="t" style="left:1228.5px;top:327.4px;font-size:20.84px;color:#3c3c3c;font-weight:400;transform:scaleX(0.9259);transform-origin:0 0;">Дата вые...</div>
<div class="t" style="left:1348.5px;top:327.4px;font-size:20.84px;color:#3c3c3c;font-weight:400;transform:scaleX(0.9259);transform-origin:0 0;">Тип комнаты</div>
<div class="t" style="left:1483.5px;top:327.4px;font-size:20.84px;color:#3c3c3c;font-weight:400;transform:scaleX(0.9259);transform-origin:0 0;">Комна...</div>
<div class="t" style="left:1573.5px;top:327.4px;font-size:20.84px;color:#3c3c3c;font-weight:400;transform:scaleX(0.9259);transform-origin:0 0;">Кол-во гост...</div>
<div class="t" style="left:1708.5px;top:327.4px;font-size:20.84px;color:#3c3c3c;font-weight:400;transform:scaleX(0.9259);transform-origin:0 0;">Баланс</div>
<div class="t" style="left:1836.5px;top:327.4px;font-size:20.84px;color:#3c3c3c;font-weight:400;transform:scaleX(0.9259);transform-origin:0 0;">Оплачено</div>
<div class="t" style="left:1964.5px;top:327.4px;font-size:20.84px;color:#3c3c3c;font-weight:400;transform:scaleX(0.9259);transform-origin:0 0;">Тариф</div>
<div class="t" style="left:2092.0px;top:327.4px;font-size:20.84px;color:#3c3c3c;font-weight:400;transform:scaleX(0.9259);transform-origin:0 0;">Длите...</div>
<div class="t" style="left:2183.0px;top:327.4px;font-size:20.84px;color:#3c3c3c;font-weight:400;transform:scaleX(0.9259);transform-origin:0 0;">Пакеты</div>
<div class="t" style="left:2303.0px;top:327.4px;font-size:20.84px;color:#3c3c3c;font-weight:400;transform:scaleX(0.9259);transform-origin:0 0;">Скидка</div>
<div class="t" style="left:2430.0px;top:327.4px;font-size:20.84px;color:#3c3c3c;font-weight:400;transform:scaleX(0.9259);transform-origin:0 0;">Скидка (ко...</div>
<div class="t" style="left:2558.0px;top:327.4px;font-size:20.84px;color:#3c3c3c;font-weight:400;transform:scaleX(0.9259);transform-origin:0 0;">Статус...</div>
<div class="t" style="left:2649.0px;top:327.4px;font-size:20.84px;color:#3c3c3c;font-weight:400;transform:scaleX(0.9259);transform-origin:0 0;">Статус</div>
<div class="b" style="left:2793px;top:319px;width:27px;height:38px;overflow:hidden">
<div class="t" style="left:6px;top:9.7px;font-size:19.3px;color:#3c3c3c">Пр</div></div>
<div class="b" style="left:372.0px;top:327.0px;width:16.0px;height:21.0px;border-top:2px solid #c3c3c3;border-right:2px solid #c3c3c3;border-bottom:2px solid #c3c3c3;box-sizing:border-box"></div>
<div class="b" style="left:367.5px;top:404.5px;width:21.0px;height:21.0px;background:#fff;border:1.6px solid #c2c2c2;box-sizing:border-box"></div>
<div class="t" style="left:409.5px;top:403.5px;font-size:21.82px;color:#2c6aad;font-weight:400;transform:scaleX(0.9259);transform-origin:0 0;">1228062</div>
<svg class="b" style="left:495.0px;top:401.0px" width="27" height="25" viewBox="0 0 27 25"><g fill="#b8c5dc" stroke="#ffffff" stroke-width="1.1"><circle cx="6" cy="4" r="4.1"/><circle cx="21" cy="4" r="4.1"/><rect x="0.5" y="6.8" width="9" height="11" rx="4.2"/><rect x="17.5" y="6.8" width="9" height="11" rx="4.2"/><path d="M3.6 25v-4.6c0-4 3.2-6.6 6.8-6.6h6.2c3.6 0 6.8 2.6 6.8 6.6v2.2c0 1.4-1 2.4-2.4 2.4z"/><circle cx="13.5" cy="9" r="5.9"/></g></svg>
<div class="t" style="left:555.8px;top:404.2px;font-size:21.06px;color:#3470ad;font-weight:400;transform:scaleX(0.8407);transform-origin:0 0;">Гость 1</div>
<div class="t" style="left:896.6px;top:405.1px;font-size:21.17px;color:#2164b4;font-weight:400;transform:scaleX(0.9259);transform-origin:0 0;">преподаватели ВУЗов</div>
<div class="b" style="left:896.6px;top:424.6px;width:200.7px;height:1.3px;background:#2a6cc0"></div>
<div class="t" style="left:1109.7px;top:404.1px;font-size:21.17px;color:#3a3a3a;font-weight:400;transform:scaleX(0.9259);transform-origin:0 0;">17.12.2025</div>
<div class="t" style="left:1229.6px;top:404.1px;font-size:21.17px;color:#3a3a3a;font-weight:400;transform:scaleX(0.9259);transform-origin:0 0;">18.01.2026</div>
<div class="b" style="left:1347.0px;top:405.0px;width:9.0px;height:18.0px;background:#f08a3c;border-radius:3px"></div>
<div class="t" style="left:1359.0px;top:404.1px;font-size:21.17px;color:#111;font-weight:400;transform:scaleX(0.7967);transform-origin:0 0;">STS</div>
<div class="t" style="left:1481.5px;top:404.1px;font-size:21.17px;color:#000;font-weight:400;transform:scaleX(0.9259);transform-origin:0 0;">410</div>
<div class="t" style="left:1574.0px;top:403.5px;font-size:21.82px;color:#444;font-weight:400;transform:scaleX(0.9259);transform-origin:0 0;">2 взр.</div>
<div class="t" style="left:1625.0px;width:200px;text-align:right;top:403.8px;font-size:21.49px;color:#333;font-weight:400;transform:scaleX(0.9259);transform-origin:100% 0;">81 000 ₽</div>
<div class="t" style="left:1853.0px;width:100px;text-align:right;top:404.1px;font-size:21.17px;color:#333;font-weight:400;transform:scaleX(0.9259);transform-origin:100% 0;">0 ₽</div>
<div class="b" style="left:1963.0px;top:405.0px;width:9.0px;height:18.0px;background:#ef8a3a;border-radius:3px"></div>
<div class="t" style="left:1975.5px;top:404.1px;font-size:21.17px;color:#111;font-weight:400;transform:scaleX(0.8142);transform-origin:0 0;">GROUP</div>
<div class="t" style="left:2093.0px;top:403.8px;font-size:21.49px;color:#444;font-weight:400;transform:scaleX(0.9813);transform-origin:0 0;">32 ночи</div>
<div class="t" style="left:2559.5px;top:404.1px;font-size:21.17px;color:#3a3a3a;font-weight:400;transform:scaleX(0.9259);transform-origin:0 0;">Занят</div>
<div class="b" style="left:2647.0px;top:399.5px;width:141.0px;height:30.5px;background:#a8ebc0;border:2px solid #68d08f;border-radius:3px;box-sizing:border-box"></div>
<div class="t" style="left:2658.6px;top:403.9px;font-size:21.38px;color:#567a66;font-weight:400;transform:scaleX(0.9259);transform-origin:0 0;">Проживание</div>
<div class="b" style="left:354.0px;top:436.0px;width:189.0px;height:42.0px;background:#f2f2f2"></div>
<div class="b" style="left:548.0px;top:436.0px;width:2272.0px;height:42.0px;background:#f2f2f2"></div>
<div class="b" style="left:367.5px;top:446.5px;width:21.0px;height:21.0px;background:#fff;border:1.6px solid #c2c2c2;box-sizing:border-box"></div>
<div class="t" style="left:409.5px;top:445.5px;font-size:21.82px;color:#2c6aad;font-weight:400;transform:scaleX(0.9259);transform-origin:0 0;">1228061</div>
<svg class="b" style="left:495.0px;top:443.0px" width="27" height="25" viewBox="0 0 27 25"><g fill="#b8c5dc" stroke="#f2f2f2" stroke-width="1.1"><circle cx="6" cy="4" r="4.1"/><circle cx="21" cy="4" r="4.1"/><rect x="0.5" y="6.8" width="9" height="11" rx="4.2"/><rect x="17.5" y="6.8" width="9" height="11" rx="4.2"/><path d="M3.6 25v-4.6c0-4 3.2-6.6 6.8-6.6h6.2c3.6 0 6.8 2.6 6.8 6.6v2.2c0 1.4-1 2.4-2.4 2.4z"/><circle cx="13.5" cy="9" r="5.9"/></g></svg>
<div class="t" style="left:555.8px;top:446.2px;font-size:21.06px;color:#3470ad;font-weight:400;transform:scaleX(0.8407);transform-origin:0 0;">Гость 2</div>
<div class="t" style="left:896.6px;top:447.1px;font-size:21.17px;color:#2164b4;font-weight:400;transform:scaleX(0.9259);transform-origin:0 0;">преподаватели ВУЗов</div>
<div class="b" style="left:896.6px;top:466.6px;width:200.7px;height:1.3px;background:#2a6cc0"></div>
<div class="t" style="left:1109.7px;top:446.1px;font-size:21.17px;color:#3a3a3a;font-weight:400;transform:scaleX(0.9259);transform-origin:0 0;">17.12.2025</div>
<div class="t" style="left:1229.6px;top:446.1px;font-size:21.17px;color:#3a3a3a;font-weight:400;transform:scaleX(0.9259);transform-origin:0 0;">18.01.2026</div>
<div class="b" style="left:1347.0px;top:447.0px;width:9.0px;height:18.0px;background:#f08a3c;border-radius:3px"></div>
<div class="t" style="left:1359.0px;top:446.1px;font-size:21.17px;color:#111;font-weight:400;transform:scaleX(0.7967);transform-origin:0 0;">STS</div>
<div class="t" style="left:1481.5px;top:446.1px;font-size:21.17px;color:#000;font-weight:400;transform:scaleX(0.9259);transform-origin:0 0;">318</div>
<div class="t" style="left:1574.0px;top:445.5px;font-size:21.82px;color:#444;font-weight:400;transform:scaleX(0.9259);transform-origin:0 0;">2 взр.</div>
<div class="t" style="left:1625.0px;width:200px;text-align:right;top:445.8px;font-size:21.49px;color:#333;font-weight:400;transform:scaleX(0.9259);transform-origin:100% 0;">81 000 ₽</div>
<div class="t" style="left:1853.0px;width:100px;text-align:right;top:446.1px;font-size:21.17px;color:#333;font-weight:400;transform:scaleX(0.9259);transform-origin:100% 0;">0 ₽</div>
<div class="b" style="left:1963.0px;top:447.0px;width:9.0px;height:18.0px;background:#ef8a3a;border-radius:3px"></div>
<div class="t" style="left:1975.5px;top:446.1px;font-size:21.17px;color:#111;font-weight:400;transform:scaleX(0.8142);transform-origin:0 0;">GROUP</div>
<div class="t" style="left:2093.0px;top:445.8px;font-size:21.49px;color:#444;font-weight:400;transform:scaleX(0.9813);transform-origin:0 0;">32 ночи</div>
<div class="t" style="left:2559.5px;top:446.1px;font-size:21.17px;color:#3a3a3a;font-weight:400;transform:scaleX(0.9259);transform-origin:0 0;">Занят</div>
<div class="b" style="left:2647.0px;top:441.5px;width:141.0px;height:30.5px;background:#a0dfb7;border:2px solid #68d08f;border-radius:3px;box-sizing:border-box"></div>
<div class="t" style="left:2658.6px;top:445.9px;font-size:21.38px;color:#567a66;font-weight:400;transform:scaleX(0.9259);transform-origin:0 0;">Проживание</div>
<div class="b" style="left:367.5px;top:488.5px;width:21.0px;height:21.0px;background:#fff;border:1.6px solid #c2c2c2;box-sizing:border-box"></div>
<div class="t" style="left:409.5px;top:487.5px;font-size:21.82px;color:#2c6aad;font-weight:400;transform:scaleX(0.9259);transform-origin:0 0;">1228061</div>
<svg class="b" style="left:495.0px;top:485.0px" width="27" height="25" viewBox="0 0 27 25"><g fill="#b8c5dc" stroke="#ffffff" stroke-width="1.1"><circle cx="6" cy="4" r="4.1"/><circle cx="21" cy="4" r="4.1"/><rect x="0.5" y="6.8" width="9" height="11" rx="4.2"/><rect x="17.5" y="6.8" width="9" height="11" rx="4.2"/><path d="M3.6 25v-4.6c0-4 3.2-6.6 6.8-6.6h6.2c3.6 0 6.8 2.6 6.8 6.6v2.2c0 1.4-1 2.4-2.4 2.4z"/><circle cx="13.5" cy="9" r="5.9"/></g></svg>
<div class="t" style="left:555.8px;top:488.2px;font-size:21.06px;color:#3470ad;font-weight:400;transform:scaleX(0.8407);transform-origin:0 0;">Гость 1</div>
<div class="t" style="left:896.6px;top:489.1px;font-size:21.17px;color:#2164b4;font-weight:400;transform:scaleX(0.9259);transform-origin:0 0;">преподаватели ВУЗов</div>
<div class="b" style="left:896.6px;top:508.6px;width:200.7px;height:1.3px;background:#2a6cc0"></div>
<div class="t" style="left:1109.7px;top:488.1px;font-size:21.17px;color:#3a3a3a;font-weight:400;transform:scaleX(0.9259);transform-origin:0 0;">17.12.2025</div>
<div class="t" style="left:1229.6px;top:488.1px;font-size:21.17px;color:#3a3a3a;font-weight:400;transform:scaleX(0.9259);transform-origin:0 0;">18.01.2026</div>
<div class="b" style="left:1347.0px;top:489.0px;width:9.0px;height:18.0px;background:#f08a3c;border-radius:3px"></div>
<div class="t" style="left:1359.0px;top:488.1px;font-size:21.17px;color:#111;font-weight:400;transform:scaleX(0.7967);transform-origin:0 0;">STS</div>
<div class="t" style="left:1481.5px;top:488.1px;font-size:21.17px;color:#000;font-weight:400;transform:scaleX(0.9259);transform-origin:0 0;">318</div>
<div class="t" style="left:1574.0px;top:487.5px;font-size:21.82px;color:#444;font-weight:400;transform:scaleX(0.9259);transform-origin:0 0;">2 взр.</div>
<div class="t" style="left:1625.0px;width:200px;text-align:right;top:487.8px;font-size:21.49px;color:#333;font-weight:400;transform:scaleX(0.9259);transform-origin:100% 0;">81 000 ₽</div>
<div class="t" style="left:1853.0px;width:100px;text-align:right;top:488.1px;font-size:21.17px;color:#333;font-weight:400;transform:scaleX(0.9259);transform-origin:100% 0;">0 ₽</div>
<div class="b" style="left:1963.0px;top:489.0px;width:9.0px;height:18.0px;background:#ef8a3a;border-radius:3px"></div>
<div class="t" style="left:1975.5px;top:488.1px;font-size:21.17px;color:#111;font-weight:400;transform:scaleX(0.8142);transform-origin:0 0;">GROUP</div>
<div class="t" style="left:2093.0px;top:487.8px;font-size:21.49px;color:#444;font-weight:400;transform:scaleX(0.9813);transform-origin:0 0;">32 ночи</div>
<div class="t" style="left:2559.5px;top:488.1px;font-size:21.17px;color:#3a3a3a;font-weight:400;transform:scaleX(0.9259);transform-origin:0 0;">Занят</div>
<div class="b" style="left:2647.0px;top:483.5px;width:141.0px;height:30.5px;background:#a8ebc0;border:2px solid #68d08f;border-radius:3px;box-sizing:border-box"></div>
<div class="t" style="left:2658.6px;top:487.9px;font-size:21.38px;color:#567a66;font-weight:400;transform:scaleX(0.9259);transform-origin:0 0;">Проживание</div>
<div class="b" style="left:354.0px;top:520.0px;width:189.0px;height:42.0px;background:#f2f2f2"></div>
<div class="b" style="left:548.0px;top:520.0px;width:2272.0px;height:42.0px;background:#f2f2f2"></div>
<div class="b" style="left:367.5px;top:530.5px;width:21.0px;height:21.0px;background:#fff;border:1.6px solid #c2c2c2;box-sizing:border-box"></div>
<div class="t" style="left:409.5px;top:529.5px;font-size:21.82px;color:#2c6aad;font-weight:400;transform:scaleX(0.9259);transform-origin:0 0;">1228060</div>
<svg class="b" style="left:495.0px;top:527.0px" width="27" height="25" viewBox="0 0 27 25"><g fill="#b8c5dc" stroke="#f2f2f2" stroke-width="1.1"><circle cx="6" cy="4" r="4.1"/><circle cx="21" cy="4" r="4.1"/><rect x="0.5" y="6.8" width="9" height="11" rx="4.2"/><rect x="17.5" y="6.8" width="9" height="11" rx="4.2"/><path d="M3.6 25v-4.6c0-4 3.2-6.6 6.8-6.6h6.2c3.6 0 6.8 2.6 6.8 6.6v2.2c0 1.4-1 2.4-2.4 2.4z"/><circle cx="13.5" cy="9" r="5.9"/></g></svg>
<div class="t" style="left:555.8px;top:530.2px;font-size:21.06px;color:#3470ad;font-weight:400;transform:scaleX(0.8407);transform-origin:0 0;">Гость 2</div>
<div class="t" style="left:896.6px;top:531.1px;font-size:21.17px;color:#2164b4;font-weight:400;transform:scaleX(0.9259);transform-origin:0 0;">преподаватели ВУЗов</div>
<div class="b" style="left:896.6px;top:550.6px;width:200.7px;height:1.3px;background:#2a6cc0"></div>
<div class="t" style="left:1109.7px;top:530.1px;font-size:21.17px;color:#3a3a3a;font-weight:400;transform:scaleX(0.9259);transform-origin:0 0;">17.12.2025</div>
<div class="t" style="left:1229.6px;top:530.1px;font-size:21.17px;color:#3a3a3a;font-weight:400;transform:scaleX(0.9259);transform-origin:0 0;">18.01.2026</div>
<div class="b" style="left:1347.0px;top:531.0px;width:9.0px;height:18.0px;background:#f08a3c;border-radius:3px"></div>
<div class="t" style="left:1359.0px;top:530.1px;font-size:21.17px;color:#111;font-weight:400;transform:scaleX(0.7967);transform-origin:0 0;">STS</div>
<div class="t" style="left:1481.5px;top:530.1px;font-size:21.17px;color:#000;font-weight:400;transform:scaleX(0.9259);transform-origin:0 0;">418</div>
<div class="t" style="left:1574.0px;top:529.5px;font-size:21.82px;color:#444;font-weight:400;transform:scaleX(0.9259);transform-origin:0 0;">2 взр.</div>
<div class="t" style="left:1625.0px;width:200px;text-align:right;top:529.8px;font-size:21.49px;color:#333;font-weight:400;transform:scaleX(0.9259);transform-origin:100% 0;">81 000 ₽</div>
<div class="t" style="left:1853.0px;width:100px;text-align:right;top:530.1px;font-size:21.17px;color:#333;font-weight:400;transform:scaleX(0.9259);transform-origin:100% 0;">0 ₽</div>
<div class="b" style="left:1963.0px;top:531.0px;width:9.0px;height:18.0px;background:#ef8a3a;border-radius:3px"></div>
<div class="t" style="left:1975.5px;top:530.1px;font-size:21.17px;color:#111;font-weight:400;transform:scaleX(0.8142);transform-origin:0 0;">GROUP</div>
<div class="t" style="left:2093.0px;top:529.8px;font-size:21.49px;color:#444;font-weight:400;transform:scaleX(0.9813);transform-origin:0 0;">32 ночи</div>
<div class="t" style="left:2559.5px;top:530.1px;font-size:21.17px;color:#3a3a3a;font-weight:400;transform:scaleX(0.9259);transform-origin:0 0;">Занят</div>
<div class="b" style="left:2647.0px;top:525.5px;width:141.0px;height:30.5px;background:#a0dfb7;border:2px solid #68d08f;border-radius:3px;box-sizing:border-box"></div>
<div class="t" style="left:2658.6px;top:529.9px;font-size:21.38px;color:#567a66;font-weight:400;transform:scaleX(0.9259);transform-origin:0 0;">Проживание</div>
<div class="b" style="left:367.5px;top:572.5px;width:21.0px;height:21.0px;background:#fff;border:1.6px solid #c2c2c2;box-sizing:border-box"></div>
<div class="t" style="left:409.5px;top:571.5px;font-size:21.82px;color:#2c6aad;font-weight:400;transform:scaleX(0.9259);transform-origin:0 0;">1228060</div>
<svg class="b" style="left:495.0px;top:569.0px" width="27" height="25" viewBox="0 0 27 25"><g fill="#b8c5dc" stroke="#ffffff" stroke-width="1.1"><circle cx="6" cy="4" r="4.1"/><circle cx="21" cy="4" r="4.1"/><rect x="0.5" y="6.8" width="9" height="11" rx="4.2"/><rect x="17.5" y="6.8" width="9" height="11" rx="4.2"/><path d="M3.6 25v-4.6c0-4 3.2-6.6 6.8-6.6h6.2c3.6 0 6.8 2.6 6.8 6.6v2.2c0 1.4-1 2.4-2.4 2.4z"/><circle cx="13.5" cy="9" r="5.9"/></g></svg>
<div class="t" style="left:555.8px;top:572.2px;font-size:21.06px;color:#3470ad;font-weight:400;transform:scaleX(0.8407);transform-origin:0 0;">Гость 1</div>
<div class="t" style="left:896.6px;top:573.1px;font-size:21.17px;color:#2164b4;font-weight:400;transform:scaleX(0.9259);transform-origin:0 0;">преподаватели ВУЗов</div>
<div class="b" style="left:896.6px;top:592.6px;width:200.7px;height:1.3px;background:#2a6cc0"></div>
<div class="t" style="left:1109.7px;top:572.1px;font-size:21.17px;color:#3a3a3a;font-weight:400;transform:scaleX(0.9259);transform-origin:0 0;">17.12.2025</div>
<div class="t" style="left:1229.6px;top:572.1px;font-size:21.17px;color:#3a3a3a;font-weight:400;transform:scaleX(0.9259);transform-origin:0 0;">18.01.2026</div>
<div class="b" style="left:1347.0px;top:573.0px;width:9.0px;height:18.0px;background:#f08a3c;border-radius:3px"></div>
<div class="t" style="left:1359.0px;top:572.1px;font-size:21.17px;color:#111;font-weight:400;transform:scaleX(0.7967);transform-origin:0 0;">STS</div>
<div class="t" style="left:1481.5px;top:572.1px;font-size:21.17px;color:#000;font-weight:400;transform:scaleX(0.9259);transform-origin:0 0;">418</div>
<div class="t" style="left:1574.0px;top:571.5px;font-size:21.82px;color:#444;font-weight:400;transform:scaleX(0.9259);transform-origin:0 0;">2 взр.</div>
<div class="t" style="left:1625.0px;width:200px;text-align:right;top:571.8px;font-size:21.49px;color:#333;font-weight:400;transform:scaleX(0.9259);transform-origin:100% 0;">81 000 ₽</div>
<div class="t" style="left:1853.0px;width:100px;text-align:right;top:572.1px;font-size:21.17px;color:#333;font-weight:400;transform:scaleX(0.9259);transform-origin:100% 0;">0 ₽</div>
<div class="b" style="left:1963.0px;top:573.0px;width:9.0px;height:18.0px;background:#ef8a3a;border-radius:3px"></div>
<div class="t" style="left:1975.5px;top:572.1px;font-size:21.17px;color:#111;font-weight:400;transform:scaleX(0.8142);transform-origin:0 0;">GROUP</div>
<div class="t" style="left:2093.0px;top:571.8px;font-size:21.49px;color:#444;font-weight:400;transform:scaleX(0.9813);transform-origin:0 0;">32 ночи</div>
<div class="t" style="left:2559.5px;top:572.1px;font-size:21.17px;color:#3a3a3a;font-weight:400;transform:scaleX(0.9259);transform-origin:0 0;">Занят</div>
<div class="b" style="left:2647.0px;top:567.5px;width:141.0px;height:30.5px;background:#a8ebc0;border:2px solid #68d08f;border-radius:3px;box-sizing:border-box"></div>
<div class="t" style="left:2658.6px;top:571.9px;font-size:21.38px;color:#567a66;font-weight:400;transform:scaleX(0.9259);transform-origin:0 0;">Проживание</div>
<div class="b" style="left:354.0px;top:604.0px;width:189.0px;height:42.0px;background:#f2f2f2"></div>
<div class="b" style="left:548.0px;top:604.0px;width:2272.0px;height:42.0px;background:#f2f2f2"></div>
<div class="b" style="left:367.5px;top:614.5px;width:21.0px;height:21.0px;background:#fff;border:1.6px solid #c2c2c2;box-sizing:border-box"></div>
<div class="t" style="left:409.5px;top:613.5px;font-size:21.82px;color:#2c6aad;font-weight:400;transform:scaleX(0.9259);transform-origin:0 0;">1228059</div>
<svg class="b" style="left:495.0px;top:611.0px" width="27" height="25" viewBox="0 0 27 25"><g fill="#b8c5dc" stroke="#f2f2f2" stroke-width="1.1"><circle cx="6" cy="4" r="4.1"/><circle cx="21" cy="4" r="4.1"/><rect x="0.5" y="6.8" width="9" height="11" rx="4.2"/><rect x="17.5" y="6.8" width="9" height="11" rx="4.2"/><path d="M3.6 25v-4.6c0-4 3.2-6.6 6.8-6.6h6.2c3.6 0 6.8 2.6 6.8 6.6v2.2c0 1.4-1 2.4-2.4 2.4z"/><circle cx="13.5" cy="9" r="5.9"/></g></svg>
<div class="t" style="left:555.8px;top:614.2px;font-size:21.06px;color:#3470ad;font-weight:400;transform:scaleX(0.8407);transform-origin:0 0;">Гость 2</div>
<div class="t" style="left:896.6px;top:615.1px;font-size:21.17px;color:#2164b4;font-weight:400;transform:scaleX(0.9259);transform-origin:0 0;">преподаватели ВУЗов</div>
<div class="b" style="left:896.6px;top:634.6px;width:200.7px;height:1.3px;background:#2a6cc0"></div>
<div class="t" style="left:1109.7px;top:614.1px;font-size:21.17px;color:#3a3a3a;font-weight:400;transform:scaleX(0.9259);transform-origin:0 0;">17.12.2025</div>
<div class="t" style="left:1229.6px;top:614.1px;font-size:21.17px;color:#3a3a3a;font-weight:400;transform:scaleX(0.9259);transform-origin:0 0;">18.01.2026</div>
<div class="b" style="left:1347.0px;top:615.0px;width:9.0px;height:18.0px;background:#f08a3c;border-radius:3px"></div>
<div class="t" style="left:1359.0px;top:614.1px;font-size:21.17px;color:#111;font-weight:400;transform:scaleX(0.7967);transform-origin:0 0;">STS</div>
<div class="t" style="left:1481.5px;top:614.1px;font-size:21.17px;color:#000;font-weight:400;transform:scaleX(0.9259);transform-origin:0 0;">310</div>
<div class="t" style="left:1574.0px;top:613.5px;font-size:21.82px;color:#444;font-weight:400;transform:scaleX(0.9259);transform-origin:0 0;">2 взр.</div>
<div class="t" style="left:1625.0px;width:200px;text-align:right;top:613.8px;font-size:21.49px;color:#333;font-weight:400;transform:scaleX(0.9259);transform-origin:100% 0;">81 000 ₽</div>
<div class="t" style="left:1853.0px;width:100px;text-align:right;top:614.1px;font-size:21.17px;color:#333;font-weight:400;transform:scaleX(0.9259);transform-origin:100% 0;">0 ₽</div>
<div class="b" style="left:1963.0px;top:615.0px;width:9.0px;height:18.0px;background:#ef8a3a;border-radius:3px"></div>
<div class="t" style="left:1975.5px;top:614.1px;font-size:21.17px;color:#111;font-weight:400;transform:scaleX(0.8142);transform-origin:0 0;">GROUP</div>
<div class="t" style="left:2093.0px;top:613.8px;font-size:21.49px;color:#444;font-weight:400;transform:scaleX(0.9813);transform-origin:0 0;">32 ночи</div>
<div class="t" style="left:2559.5px;top:614.1px;font-size:21.17px;color:#3a3a3a;font-weight:400;transform:scaleX(0.9259);transform-origin:0 0;">Занят</div>
<div class="b" style="left:2647.0px;top:609.5px;width:141.0px;height:30.5px;background:#a0dfb7;border:2px solid #68d08f;border-radius:3px;box-sizing:border-box"></div>
<div class="t" style="left:2658.6px;top:613.9px;font-size:21.38px;color:#567a66;font-weight:400;transform:scaleX(0.9259);transform-origin:0 0;">Проживание</div>
<div class="b" style="left:367.5px;top:656.5px;width:21.0px;height:21.0px;background:#fff;border:1.6px solid #c2c2c2;box-sizing:border-box"></div>
<div class="t" style="left:409.5px;top:655.5px;font-size:21.82px;color:#2c6aad;font-weight:400;transform:scaleX(0.9259);transform-origin:0 0;">1228059</div>
<svg class="b" style="left:495.0px;top:653.0px" width="27" height="25" viewBox="0 0 27 25"><g fill="#b8c5dc" stroke="#ffffff" stroke-width="1.1"><circle cx="6" cy="4" r="4.1"/><circle cx="21" cy="4" r="4.1"/><rect x="0.5" y="6.8" width="9" height="11" rx="4.2"/><rect x="17.5" y="6.8" width="9" height="11" rx="4.2"/><path d="M3.6 25v-4.6c0-4 3.2-6.6 6.8-6.6h6.2c3.6 0 6.8 2.6 6.8 6.6v2.2c0 1.4-1 2.4-2.4 2.4z"/><circle cx="13.5" cy="9" r="5.9"/></g></svg>
<div class="t" style="left:555.8px;top:656.2px;font-size:21.06px;color:#3470ad;font-weight:400;transform:scaleX(0.8407);transform-origin:0 0;">Гость 1</div>
<div class="t" style="left:896.6px;top:657.1px;font-size:21.17px;color:#2164b4;font-weight:400;transform:scaleX(0.9259);transform-origin:0 0;">преподаватели ВУЗов</div>
<div class="b" style="left:896.6px;top:676.6px;width:200.7px;height:1.3px;background:#2a6cc0"></div>
<div class="t" style="left:1109.7px;top:656.1px;font-size:21.17px;color:#3a3a3a;font-weight:400;transform:scaleX(0.9259);transform-origin:0 0;">17.12.2025</div>
<div class="t" style="left:1229.6px;top:656.1px;font-size:21.17px;color:#3a3a3a;font-weight:400;transform:scaleX(0.9259);transform-origin:0 0;">18.01.2026</div>
<div class="b" style="left:1347.0px;top:657.0px;width:9.0px;height:18.0px;background:#f08a3c;border-radius:3px"></div>
<div class="t" style="left:1359.0px;top:656.1px;font-size:21.17px;color:#111;font-weight:400;transform:scaleX(0.7967);transform-origin:0 0;">STS</div>
<div class="t" style="left:1481.5px;top:656.1px;font-size:21.17px;color:#000;font-weight:400;transform:scaleX(0.9259);transform-origin:0 0;">310</div>
<div class="t" style="left:1574.0px;top:655.5px;font-size:21.82px;color:#444;font-weight:400;transform:scaleX(0.9259);transform-origin:0 0;">2 взр.</div>
<div class="t" style="left:1625.0px;width:200px;text-align:right;top:655.8px;font-size:21.49px;color:#333;font-weight:400;transform:scaleX(0.9259);transform-origin:100% 0;">81 000 ₽</div>
<div class="t" style="left:1853.0px;width:100px;text-align:right;top:656.1px;font-size:21.17px;color:#333;font-weight:400;transform:scaleX(0.9259);transform-origin:100% 0;">0 ₽</div>
<div class="b" style="left:1963.0px;top:657.0px;width:9.0px;height:18.0px;background:#ef8a3a;border-radius:3px"></div>
<div class="t" style="left:1975.5px;top:656.1px;font-size:21.17px;color:#111;font-weight:400;transform:scaleX(0.8142);transform-origin:0 0;">GROUP</div>
<div class="t" style="left:2093.0px;top:655.8px;font-size:21.49px;color:#444;font-weight:400;transform:scaleX(0.9813);transform-origin:0 0;">32 ночи</div>
<div class="t" style="left:2559.5px;top:656.1px;font-size:21.17px;color:#3a3a3a;font-weight:400;transform:scaleX(0.9259);transform-origin:0 0;">Занят</div>
<div class="b" style="left:2647.0px;top:651.5px;width:141.0px;height:30.5px;background:#a8ebc0;border:2px solid #68d08f;border-radius:3px;box-sizing:border-box"></div>
<div class="t" style="left:2658.6px;top:655.9px;font-size:21.38px;color:#567a66;font-weight:400;transform:scaleX(0.9259);transform-origin:0 0;">Проживание</div>
<div class="b" style="left:354.0px;top:688.0px;width:189.0px;height:42.0px;background:#f2f2f2"></div>
<div class="b" style="left:548.0px;top:688.0px;width:2272.0px;height:42.0px;background:#f2f2f2"></div>
<div class="b" style="left:367.5px;top:698.5px;width:21.0px;height:21.0px;background:#fff;border:1.6px solid #c2c2c2;box-sizing:border-box"></div>
<div class="t" style="left:409.5px;top:697.5px;font-size:21.82px;color:#2c6aad;font-weight:400;transform:scaleX(0.9259);transform-origin:0 0;">1228011</div>
<div class="t" style="left:555.8px;top:698.1px;font-size:21.17px;color:#3470ad;font-weight:400;transform:scaleX(0.9259);transform-origin:0 0;">Плющенко Никита</div>
<div class="t" style="left:1109.7px;top:698.1px;font-size:21.17px;color:#3a3a3a;font-weight:400;transform:scaleX(0.9259);transform-origin:0 0;">04.12.2025</div>
<div class="t" style="left:1229.6px;top:698.1px;font-size:21.17px;color:#3a3a3a;font-weight:400;transform:scaleX(0.9259);transform-origin:0 0;">22.01.2026</div>
<div class="b" style="left:1347.0px;top:699.0px;width:9.0px;height:18.0px;background:#2a86a6;border-radius:3px"></div>
<div class="t" style="left:1359.0px;top:698.1px;font-size:21.17px;color:#111;font-weight:400;transform:scaleX(0.8432);transform-origin:0 0;">DET</div>
<div class="t" style="left:1481.5px;top:698.1px;font-size:21.17px;color:#000;font-weight:400;transform:scaleX(0.9259);transform-origin:0 0;">414</div>
<div class="t" style="left:1574.0px;top:697.5px;font-size:21.82px;color:#444;font-weight:400;transform:scaleX(0.9259);transform-origin:0 0;">1 взр.</div>
<div class="t" style="left:1625.0px;width:200px;text-align:right;top:697.8px;font-size:21.49px;color:#333;font-weight:400;transform:scaleX(0.9259);transform-origin:100% 0;">308 000 ₽</div>
<div class="t" style="left:1853.0px;width:100px;text-align:right;top:698.1px;font-size:21.17px;color:#333;font-weight:400;transform:scaleX(0.9259);transform-origin:100% 0;">0 ₽</div>
<div class="b" style="left:1963.0px;top:699.0px;width:9.0px;height:18.0px;background:#f5ec00;border-radius:3px"></div>
<div class="t" style="left:1975.5px;top:698.1px;font-size:21.17px;color:#111;font-weight:400;transform:scaleX(0.7822);transform-origin:0 0;">RACK</div>
<div class="t" style="left:2093.0px;top:697.8px;font-size:21.49px;color:#444;font-weight:400;transform:scaleX(0.9356);transform-origin:0 0;">49 но...</div>
<div class="t" style="left:2183.3px;top:698.1px;font-size:21.17px;color:#333;font-weight:400;transform:scaleX(0.8605);transform-origin:0 0;">FB, ОБЕД</div>
<div class="t" style="left:2559.5px;top:698.1px;font-size:21.17px;color:#3a3a3a;font-weight:400;transform:scaleX(0.9259);transform-origin:0 0;">Занят</div>
<div class="b" style="left:2647.0px;top:693.5px;width:141.0px;height:30.5px;background:#a0dfb7;border:2px solid #68d08f;border-radius:3px;box-sizing:border-box"></div>
<div class="t" style="left:2658.6px;top:697.9px;font-size:21.38px;color:#567a66;font-weight:400;transform:scaleX(0.9259);transform-origin:0 0;">Проживание</div>
<div class="b" style="left:367.5px;top:740.5px;width:21.0px;height:21.0px;background:#fff;border:1.6px solid #c2c2c2;box-sizing:border-box"></div>
<div class="t" style="left:409.5px;top:739.5px;font-size:21.82px;color:#2c6aad;font-weight:400;transform:scaleX(0.9259);transform-origin:0 0;">1228010</div>
<div class="t" style="left:555.8px;top:740.1px;font-size:21.17px;color:#3470ad;font-weight:400;transform:scaleX(0.9259);transform-origin:0 0;">Плющенко Никита</div>
<div class="t" style="left:1109.7px;top:740.1px;font-size:21.17px;color:#3a3a3a;font-weight:400;transform:scaleX(0.9259);transform-origin:0 0;">03.12.2025</div>
<div class="t" style="left:1229.6px;top:740.1px;font-size:21.17px;color:#3a3a3a;font-weight:400;transform:scaleX(0.9259);transform-origin:0 0;">04.02.2026</div>
<div class="b" style="left:1347.0px;top:741.0px;width:9.0px;height:18.0px;background:#dd7424;border-radius:3px"></div>
<div class="t" style="left:1359.0px;top:740.1px;font-size:21.17px;color:#111;font-weight:400;transform:scaleX(0.8329);transform-origin:0 0;">STT</div>
<div class="t" style="left:1481.5px;top:740.1px;font-size:21.17px;color:#000;font-weight:400;transform:scaleX(0.9259);transform-origin:0 0;">501</div>
<div class="t" style="left:1574.0px;top:739.5px;font-size:21.82px;color:#444;font-weight:400;transform:scaleX(0.9259);transform-origin:0 0;">1 взр.</div>
<div class="t" style="left:1625.0px;width:200px;text-align:right;top:739.8px;font-size:21.49px;color:#333;font-weight:400;transform:scaleX(0.9259);transform-origin:100% 0;">274 700 ₽</div>
<div class="t" style="left:1853.0px;width:100px;text-align:right;top:740.1px;font-size:21.17px;color:#333;font-weight:400;transform:scaleX(0.9259);transform-origin:100% 0;">0 ₽</div>
<div class="b" style="left:1963.0px;top:741.0px;width:9.0px;height:18.0px;background:#f5ec00;border-radius:3px"></div>
<div class="t" style="left:1975.5px;top:740.1px;font-size:21.17px;color:#111;font-weight:400;transform:scaleX(0.7822);transform-origin:0 0;">RACK</div>
<div class="t" style="left:2093.0px;top:739.8px;font-size:21.49px;color:#444;font-weight:400;transform:scaleX(0.9813);transform-origin:0 0;">63 ночи</div>
<div class="t" style="left:2183.3px;top:740.1px;font-size:21.17px;color:#333;font-weight:400;transform:scaleX(0.8605);transform-origin:0 0;">FB, ОБЕД</div>
<div class="t" style="left:2559.5px;top:740.1px;font-size:21.17px;color:#3a3a3a;font-weight:400;transform:scaleX(0.9259);transform-origin:0 0;">Занят</div>
<div class="b" style="left:2647.0px;top:735.5px;width:141.0px;height:30.5px;background:#a8ebc0;border:2px solid #68d08f;border-radius:3px;box-sizing:border-box"></div>
<div class="t" style="left:2658.6px;top:739.9px;font-size:21.38px;color:#567a66;font-weight:400;transform:scaleX(0.9259);transform-origin:0 0;">Проживание</div>
<div class="b" style="left:354.0px;top:772.0px;width:189.0px;height:42.0px;background:#f2f2f2"></div>
<div class="b" style="left:548.0px;top:772.0px;width:2272.0px;height:42.0px;background:#f2f2f2"></div>
<div class="b" style="left:367.5px;top:782.5px;width:21.0px;height:21.0px;background:#fff;border:1.6px solid #c2c2c2;box-sizing:border-box"></div>
<div class="t" style="left:409.5px;top:781.5px;font-size:21.82px;color:#2c6aad;font-weight:400;transform:scaleX(0.9259);transform-origin:0 0;">1228009</div>
<div class="t" style="left:555.8px;top:782.1px;font-size:21.17px;color:#3470ad;font-weight:400;transform:scaleX(0.9259);transform-origin:0 0;">Плющенко Никита</div>
<div class="t" style="left:1109.7px;top:782.1px;font-size:21.17px;color:#3a3a3a;font-weight:400;transform:scaleX(0.9259);transform-origin:0 0;">02.12.2025</div>
<div class="t" style="left:1229.6px;top:782.1px;font-size:21.17px;color:#3a3a3a;font-weight:400;transform:scaleX(0.9259);transform-origin:0 0;">21.01.2026</div>
<div class="b" style="left:1347.0px;top:783.0px;width:9.0px;height:18.0px;background:#8a2a0c;border-radius:3px"></div>
<div class="t" style="left:1359.0px;top:782.1px;font-size:21.17px;color:#111;font-weight:400;transform:scaleX(0.8267);transform-origin:0 0;">STD</div>
<div class="t" style="left:1481.5px;top:782.1px;font-size:21.17px;color:#000;font-weight:400;transform:scaleX(0.9259);transform-origin:0 0;">303</div>
<div class="t" style="left:1574.0px;top:781.5px;font-size:21.82px;color:#444;font-weight:400;transform:scaleX(0.9259);transform-origin:0 0;">1 взр.</div>
<div class="t" style="left:1625.0px;width:200px;text-align:right;top:781.8px;font-size:21.49px;color:#333;font-weight:400;transform:scaleX(0.9259);transform-origin:100% 0;">285 600 ₽</div>
<div class="t" style="left:1853.0px;width:100px;text-align:right;top:782.1px;font-size:21.17px;color:#333;font-weight:400;transform:scaleX(0.9259);transform-origin:100% 0;">0 ₽</div>
<div class="b" style="left:1963.0px;top:783.0px;width:9.0px;height:18.0px;background:#f5ec00;border-radius:3px"></div>
<div class="t" style="left:1975.5px;top:782.1px;font-size:21.17px;color:#111;font-weight:400;transform:scaleX(0.7822);transform-origin:0 0;">RACK</div>
<div class="t" style="left:2093.0px;top:781.8px;font-size:21.49px;color:#444;font-weight:400;transform:scaleX(0.9356);transform-origin:0 0;">50 но...</div>
<div class="t" style="left:2183.3px;top:782.1px;font-size:21.17px;color:#333;font-weight:400;transform:scaleX(0.8605);transform-origin:0 0;">FB, ОБЕД</div>
<div class="t" style="left:2559.5px;top:782.1px;font-size:21.17px;color:#3a3a3a;font-weight:400;transform:scaleX(0.9259);transform-origin:0 0;">Занят</div>
<div class="b" style="left:2647.0px;top:777.5px;width:141.0px;height:30.5px;background:#a0dfb7;border:2px solid #68d08f;border-radius:3px;box-sizing:border-box"></div>
<div class="t" style="left:2658.6px;top:781.9px;font-size:21.38px;color:#567a66;font-weight:400;transform:scaleX(0.9259);transform-origin:0 0;">Проживание</div>
<div class="b" style="left:367.5px;top:824.5px;width:21.0px;height:21.0px;background:#fff;border:1.6px solid #c2c2c2;box-sizing:border-box"></div>
<div class="t" style="left:409.5px;top:823.5px;font-size:21.82px;color:#2c6aad;font-weight:400;transform:scaleX(0.9259);transform-origin:0 0;">1217949</div>
<svg class="b" style="left:495.0px;top:821.0px" width="27" height="25" viewBox="0 0 27 25"><g fill="#b8c5dc" stroke="#ffffff" stroke-width="1.1"><circle cx="6" cy="4" r="4.1"/><circle cx="21" cy="4" r="4.1"/><rect x="0.5" y="6.8" width="9" height="11" rx="4.2"/><rect x="17.5" y="6.8" width="9" height="11" rx="4.2"/><path d="M3.6 25v-4.6c0-4 3.2-6.6 6.8-6.6h6.2c3.6 0 6.8 2.6 6.8 6.6v2.2c0 1.4-1 2.4-2.4 2.4z"/><circle cx="13.5" cy="9" r="5.9"/></g></svg>
<div class="t" style="left:555.8px;top:824.2px;font-size:21.06px;color:#3470ad;font-weight:400;transform:scaleX(0.8407);transform-origin:0 0;">Гость 2</div>
<div class="t" style="left:896.6px;top:825.1px;font-size:21.17px;color:#2164b4;font-weight:400;letter-spacing:0.6pxtransform:scaleX(0.9259);transform-origin:0 0;">Фокусники</div>
<div class="b" style="left:896.6px;top:844.6px;width:101.0px;height:1.3px;background:#2a6cc0"></div>
<div class="t" style="left:1109.7px;top:824.1px;font-size:21.17px;color:#3a3a3a;font-weight:400;transform:scaleX(0.9259);transform-origin:0 0;">06.12.2025</div>
<div class="t" style="left:1229.6px;top:824.1px;font-size:21.17px;color:#3a3a3a;font-weight:400;transform:scaleX(0.9259);transform-origin:0 0;">14.01.2026</div>
<div class="b" style="left:1347.0px;top:825.0px;width:9.0px;height:18.0px;background:#8a2a0c;border-radius:3px"></div>
<div class="t" style="left:1359.0px;top:824.1px;font-size:21.17px;color:#111;font-weight:400;transform:scaleX(0.8267);transform-origin:0 0;">STD</div>
<div class="t" style="left:1481.5px;top:824.1px;font-size:21.17px;color:#000;font-weight:400;transform:scaleX(0.9259);transform-origin:0 0;">403</div>
<div class="t" style="left:1574.0px;top:823.5px;font-size:21.82px;color:#444;font-weight:400;transform:scaleX(0.9259);transform-origin:0 0;">2 взр.</div>
<div class="t" style="left:1625.0px;width:200px;text-align:right;top:823.8px;font-size:21.49px;color:#333;font-weight:400;transform:scaleX(0.9259);transform-origin:100% 0;">273 600 ₽</div>
<div class="t" style="left:1853.0px;width:100px;text-align:right;top:824.1px;font-size:21.17px;color:#333;font-weight:400;transform:scaleX(0.9259);transform-origin:100% 0;">0 ₽</div>
<div class="b" style="left:1963.0px;top:825.0px;width:9.0px;height:18.0px;background:#f5ec00;border-radius:3px"></div>
<div class="t" style="left:1975.5px;top:824.1px;font-size:21.17px;color:#111;font-weight:400;transform:scaleX(0.7822);transform-origin:0 0;">RACK</div>
<div class="t" style="left:2093.0px;top:823.8px;font-size:21.49px;color:#444;font-weight:400;transform:scaleX(0.9356);transform-origin:0 0;">39 но...</div>
<div class="t" style="left:2183.3px;top:824.1px;font-size:21.17px;color:#333;font-weight:400;transform:scaleX(0.8605);transform-origin:0 0;">FB, ОБЕД</div>
<div class="t" style="left:2559.5px;top:824.1px;font-size:21.17px;color:#3a3a3a;font-weight:400;transform:scaleX(0.9259);transform-origin:0 0;">Занят</div>
<div class="b" style="left:2647.0px;top:819.5px;width:141.0px;height:30.5px;background:#a8ebc0;border:2px solid #68d08f;border-radius:3px;box-sizing:border-box"></div>
<div class="t" style="left:2658.6px;top:823.9px;font-size:21.38px;color:#567a66;font-weight:400;transform:scaleX(0.9259);transform-origin:0 0;">Проживание</div>
<div class="b" style="left:354.0px;top:856.0px;width:189.0px;height:42.0px;background:#f2f2f2"></div>
<div class="b" style="left:548.0px;top:856.0px;width:2272.0px;height:42.0px;background:#f2f2f2"></div>
<div class="b" style="left:367.5px;top:866.5px;width:21.0px;height:21.0px;background:#fff;border:1.6px solid #c2c2c2;box-sizing:border-box"></div>
<div class="t" style="left:409.5px;top:865.5px;font-size:21.82px;color:#2c6aad;font-weight:400;transform:scaleX(0.9259);transform-origin:0 0;">1217949</div>
<svg class="b" style="left:495.0px;top:863.0px" width="27" height="25" viewBox="0 0 27 25"><g fill="#b8c5dc" stroke="#f2f2f2" stroke-width="1.1"><circle cx="6" cy="4" r="4.1"/><circle cx="21" cy="4" r="4.1"/><rect x="0.5" y="6.8" width="9" height="11" rx="4.2"/><rect x="17.5" y="6.8" width="9" height="11" rx="4.2"/><path d="M3.6 25v-4.6c0-4 3.2-6.6 6.8-6.6h6.2c3.6 0 6.8 2.6 6.8 6.6v2.2c0 1.4-1 2.4-2.4 2.4z"/><circle cx="13.5" cy="9" r="5.9"/></g></svg>
<div class="t" style="left:555.8px;top:866.2px;font-size:21.06px;color:#3470ad;font-weight:400;transform:scaleX(0.8407);transform-origin:0 0;">Гость 1</div>
<div class="t" style="left:896.6px;top:867.1px;font-size:21.17px;color:#2164b4;font-weight:400;letter-spacing:0.6pxtransform:scaleX(0.9259);transform-origin:0 0;">Фокусники</div>
<div class="b" style="left:896.6px;top:886.6px;width:101.0px;height:1.3px;background:#2a6cc0"></div>
<div class="t" style="left:1109.7px;top:866.1px;font-size:21.17px;color:#3a3a3a;font-weight:400;transform:scaleX(0.9259);transform-origin:0 0;">06.12.2025</div>
<div class="t" style="left:1229.6px;top:866.1px;font-size:21.17px;color:#3a3a3a;font-weight:400;transform:scaleX(0.9259);transform-origin:0 0;">14.01.2026</div>
<div class="b" style="left:1347.0px;top:867.0px;width:9.0px;height:18.0px;background:#8a2a0c;border-radius:3px"></div>
<div class="t" style="left:1359.0px;top:866.1px;font-size:21.17px;color:#111;font-weight:400;transform:scaleX(0.8267);transform-origin:0 0;">STD</div>
<div class="t" style="left:1481.5px;top:866.1px;font-size:21.17px;color:#000;font-weight:400;transform:scaleX(0.9259);transform-origin:0 0;">403</div>
<div class="t" style="left:1574.0px;top:865.5px;font-size:21.82px;color:#444;font-weight:400;transform:scaleX(0.9259);transform-origin:0 0;">2 взр.</div>
<div class="t" style="left:1625.0px;width:200px;text-align:right;top:865.8px;font-size:21.49px;color:#333;font-weight:400;transform:scaleX(0.9259);transform-origin:100% 0;">273 600 ₽</div>
<div class="t" style="left:1853.0px;width:100px;text-align:right;top:866.1px;font-size:21.17px;color:#333;font-weight:400;transform:scaleX(0.9259);transform-origin:100% 0;">0 ₽</div>
<div class="b" style="left:1963.0px;top:867.0px;width:9.0px;height:18.0px;background:#f5ec00;border-radius:3px"></div>
<div class="t" style="left:1975.5px;top:866.1px;font-size:21.17px;color:#111;font-weight:400;transform:scaleX(0.7822);transform-origin:0 0;">RACK</div>
<div class="t" style="left:2093.0px;top:865.8px;font-size:21.49px;color:#444;font-weight:400;transform:scaleX(0.9356);transform-origin:0 0;">39 но...</div>
<div class="t" style="left:2183.3px;top:866.1px;font-size:21.17px;color:#333;font-weight:400;transform:scaleX(0.8605);transform-origin:0 0;">FB, ОБЕД</div>
<div class="t" style="left:2559.5px;top:866.1px;font-size:21.17px;color:#3a3a3a;font-weight:400;transform:scaleX(0.9259);transform-origin:0 0;">Занят</div>
<div class="b" style="left:2647.0px;top:861.5px;width:141.0px;height:30.5px;background:#a0dfb7;border:2px solid #68d08f;border-radius:3px;box-sizing:border-box"></div>
<div class="t" style="left:2658.6px;top:865.9px;font-size:21.38px;color:#567a66;font-weight:400;transform:scaleX(0.9259);transform-origin:0 0;">Проживание</div>
<div class="b" style="left:367.5px;top:908.5px;width:21.0px;height:21.0px;background:#fff;border:1.6px solid #c2c2c2;box-sizing:border-box"></div>
<div class="t" style="left:409.5px;top:907.5px;font-size:21.82px;color:#2c6aad;font-weight:400;transform:scaleX(0.9259);transform-origin:0 0;">1217948</div>
<svg class="b" style="left:495.0px;top:905.0px" width="27" height="25" viewBox="0 0 27 25"><g fill="#b8c5dc" stroke="#ffffff" stroke-width="1.1"><circle cx="6" cy="4" r="4.1"/><circle cx="21" cy="4" r="4.1"/><rect x="0.5" y="6.8" width="9" height="11" rx="4.2"/><rect x="17.5" y="6.8" width="9" height="11" rx="4.2"/><path d="M3.6 25v-4.6c0-4 3.2-6.6 6.8-6.6h6.2c3.6 0 6.8 2.6 6.8 6.6v2.2c0 1.4-1 2.4-2.4 2.4z"/><circle cx="13.5" cy="9" r="5.9"/></g></svg>
<div class="t" style="left:555.8px;top:908.2px;font-size:21.06px;color:#3470ad;font-weight:400;transform:scaleX(0.8407);transform-origin:0 0;">Гость 2</div>
<div class="t" style="left:896.6px;top:909.1px;font-size:21.17px;color:#2164b4;font-weight:400;letter-spacing:0.6pxtransform:scaleX(0.9259);transform-origin:0 0;">Фокусники</div>
<div class="b" style="left:896.6px;top:928.6px;width:101.0px;height:1.3px;background:#2a6cc0"></div>
<div class="t" style="left:1109.7px;top:908.1px;font-size:21.17px;color:#3a3a3a;font-weight:400;transform:scaleX(0.9259);transform-origin:0 0;">06.12.2025</div>
<div class="t" style="left:1229.6px;top:908.1px;font-size:21.17px;color:#3a3a3a;font-weight:400;transform:scaleX(0.9259);transform-origin:0 0;">14.01.2026</div>
<div class="b" style="left:1347.0px;top:909.0px;width:9.0px;height:18.0px;background:#8a2a0c;border-radius:3px"></div>
<div class="t" style="left:1359.0px;top:908.1px;font-size:21.17px;color:#111;font-weight:400;transform:scaleX(0.8267);transform-origin:0 0;">STD</div>
<div class="t" style="left:1481.5px;top:908.1px;font-size:21.17px;color:#000;font-weight:400;transform:scaleX(0.9259);transform-origin:0 0;">402</div>
<div class="t" style="left:1574.0px;top:907.5px;font-size:21.82px;color:#444;font-weight:400;transform:scaleX(0.9259);transform-origin:0 0;">2 взр.</div>
<div class="t" style="left:1625.0px;width:200px;text-align:right;top:907.8px;font-size:21.49px;color:#333;font-weight:400;transform:scaleX(0.9259);transform-origin:100% 0;">273 600 ₽</div>
<div class="t" style="left:1853.0px;width:100px;text-align:right;top:908.1px;font-size:21.17px;color:#333;font-weight:400;transform:scaleX(0.9259);transform-origin:100% 0;">0 ₽</div>
<div class="b" style="left:1963.0px;top:909.0px;width:9.0px;height:18.0px;background:#f5ec00;border-radius:3px"></div>
<div class="t" style="left:1975.5px;top:908.1px;font-size:21.17px;color:#111;font-weight:400;transform:scaleX(0.7822);transform-origin:0 0;">RACK</div>
<div class="t" style="left:2093.0px;top:907.8px;font-size:21.49px;color:#444;font-weight:400;transform:scaleX(0.9356);transform-origin:0 0;">39 но...</div>
<div class="t" style="left:2183.3px;top:908.1px;font-size:21.17px;color:#333;font-weight:400;transform:scaleX(0.8605);transform-origin:0 0;">FB, ОБЕД</div>
<div class="t" style="left:2559.5px;top:908.1px;font-size:21.17px;color:#3a3a3a;font-weight:400;transform:scaleX(0.9259);transform-origin:0 0;">Занят</div>
<div class="b" style="left:2647.0px;top:903.5px;width:141.0px;height:30.5px;background:#a8ebc0;border:2px solid #68d08f;border-radius:3px;box-sizing:border-box"></div>
<div class="t" style="left:2658.6px;top:907.9px;font-size:21.38px;color:#567a66;font-weight:400;transform:scaleX(0.9259);transform-origin:0 0;">Проживание</div>
<div class="b" style="left:354.0px;top:940.0px;width:189.0px;height:42.0px;background:#f2f2f2"></div>
<div class="b" style="left:548.0px;top:940.0px;width:2272.0px;height:42.0px;background:#f2f2f2"></div>
<div class="b" style="left:367.5px;top:950.5px;width:21.0px;height:21.0px;background:#fff;border:1.6px solid #c2c2c2;box-sizing:border-box"></div>
<div class="t" style="left:409.5px;top:949.5px;font-size:21.82px;color:#2c6aad;font-weight:400;transform:scaleX(0.9259);transform-origin:0 0;">1217948</div>
<svg class="b" style="left:495.0px;top:947.0px" width="27" height="25" viewBox="0 0 27 25"><g fill="#b8c5dc" stroke="#f2f2f2" stroke-width="1.1"><circle cx="6" cy="4" r="4.1"/><circle cx="21" cy="4" r="4.1"/><rect x="0.5" y="6.8" width="9" height="11" rx="4.2"/><rect x="17.5" y="6.8" width="9" height="11" rx="4.2"/><path d="M3.6 25v-4.6c0-4 3.2-6.6 6.8-6.6h6.2c3.6 0 6.8 2.6 6.8 6.6v2.2c0 1.4-1 2.4-2.4 2.4z"/><circle cx="13.5" cy="9" r="5.9"/></g></svg>
<div class="t" style="left:555.8px;top:950.2px;font-size:21.06px;color:#3470ad;font-weight:400;transform:scaleX(0.8407);transform-origin:0 0;">Гость 1</div>
<div class="t" style="left:896.6px;top:951.1px;font-size:21.17px;color:#2164b4;font-weight:400;letter-spacing:0.6pxtransform:scaleX(0.9259);transform-origin:0 0;">Фокусники</div>
<div class="b" style="left:896.6px;top:970.6px;width:101.0px;height:1.3px;background:#2a6cc0"></div>
<div class="t" style="left:1109.7px;top:950.1px;font-size:21.17px;color:#3a3a3a;font-weight:400;transform:scaleX(0.9259);transform-origin:0 0;">06.12.2025</div>
<div class="t" style="left:1229.6px;top:950.1px;font-size:21.17px;color:#3a3a3a;font-weight:400;transform:scaleX(0.9259);transform-origin:0 0;">14.01.2026</div>
<div class="b" style="left:1347.0px;top:951.0px;width:9.0px;height:18.0px;background:#8a2a0c;border-radius:3px"></div>
<div class="t" style="left:1359.0px;top:950.1px;font-size:21.17px;color:#111;font-weight:400;transform:scaleX(0.8267);transform-origin:0 0;">STD</div>
<div class="t" style="left:1481.5px;top:950.1px;font-size:21.17px;color:#000;font-weight:400;transform:scaleX(0.9259);transform-origin:0 0;">402</div>
<div class="t" style="left:1574.0px;top:949.5px;font-size:21.82px;color:#444;font-weight:400;transform:scaleX(0.9259);transform-origin:0 0;">2 взр.</div>
<div class="t" style="left:1625.0px;width:200px;text-align:right;top:949.8px;font-size:21.49px;color:#333;font-weight:400;transform:scaleX(0.9259);transform-origin:100% 0;">273 600 ₽</div>
<div class="t" style="left:1853.0px;width:100px;text-align:right;top:950.1px;font-size:21.17px;color:#333;font-weight:400;transform:scaleX(0.9259);transform-origin:100% 0;">0 ₽</div>
<div class="b" style="left:1963.0px;top:951.0px;width:9.0px;height:18.0px;background:#f5ec00;border-radius:3px"></div>
<div class="t" style="left:1975.5px;top:950.1px;font-size:21.17px;color:#111;font-weight:400;transform:scaleX(0.7822);transform-origin:0 0;">RACK</div>
<div class="t" style="left:2093.0px;top:949.8px;font-size:21.49px;color:#444;font-weight:400;transform:scaleX(0.9356);transform-origin:0 0;">39 но...</div>
<div class="t" style="left:2183.3px;top:950.1px;font-size:21.17px;color:#333;font-weight:400;transform:scaleX(0.8605);transform-origin:0 0;">FB, ОБЕД</div>
<div class="t" style="left:2559.5px;top:950.1px;font-size:21.17px;color:#3a3a3a;font-weight:400;transform:scaleX(0.9259);transform-origin:0 0;">Занят</div>
<div class="b" style="left:2647.0px;top:945.5px;width:141.0px;height:30.5px;background:#a0dfb7;border:2px solid #68d08f;border-radius:3px;box-sizing:border-box"></div>
<div class="t" style="left:2658.6px;top:949.9px;font-size:21.38px;color:#567a66;font-weight:400;transform:scaleX(0.9259);transform-origin:0 0;">Проживание</div>
<div class="b" style="left:367.5px;top:992.5px;width:21.0px;height:21.0px;background:#fff;border:1.6px solid #c2c2c2;box-sizing:border-box"></div>
<div class="t" style="left:409.5px;top:991.5px;font-size:21.82px;color:#2c6aad;font-weight:400;transform:scaleX(0.9259);transform-origin:0 0;">1217947</div>
<svg class="b" style="left:495.0px;top:989.0px" width="27" height="25" viewBox="0 0 27 25"><g fill="#b8c5dc" stroke="#ffffff" stroke-width="1.1"><circle cx="6" cy="4" r="4.1"/><circle cx="21" cy="4" r="4.1"/><rect x="0.5" y="6.8" width="9" height="11" rx="4.2"/><rect x="17.5" y="6.8" width="9" height="11" rx="4.2"/><path d="M3.6 25v-4.6c0-4 3.2-6.6 6.8-6.6h6.2c3.6 0 6.8 2.6 6.8 6.6v2.2c0 1.4-1 2.4-2.4 2.4z"/><circle cx="13.5" cy="9" r="5.9"/></g></svg>
<div class="t" style="left:555.8px;top:992.2px;font-size:21.06px;color:#3470ad;font-weight:400;transform:scaleX(0.8407);transform-origin:0 0;">Гость 2</div>
<div class="t" style="left:896.6px;top:993.1px;font-size:21.17px;color:#2164b4;font-weight:400;letter-spacing:0.6pxtransform:scaleX(0.9259);transform-origin:0 0;">Фокусники</div>
<div class="b" style="left:896.6px;top:1012.6px;width:101.0px;height:1.3px;background:#2a6cc0"></div>
<div class="t" style="left:1109.7px;top:992.1px;font-size:21.17px;color:#3a3a3a;font-weight:400;transform:scaleX(0.9259);transform-origin:0 0;">06.12.2025</div>
<div class="t" style="left:1229.6px;top:992.1px;font-size:21.17px;color:#3a3a3a;font-weight:400;transform:scaleX(0.9259);transform-origin:0 0;">14.01.2026</div>
<div class="b" style="left:1347.0px;top:993.0px;width:9.0px;height:18.0px;background:#4aa6c8;border-radius:3px"></div>
<div class="t" style="left:1359.0px;top:992.1px;font-size:21.17px;color:#111;font-weight:400;transform:scaleX(0.8548);transform-origin:0 0;">DEL</div>
<div class="t" style="left:1481.5px;top:992.1px;font-size:21.17px;color:#000;font-weight:400;transform:scaleX(0.9259);transform-origin:0 0;">508</div>
<div class="t" style="left:1574.0px;top:991.5px;font-size:21.82px;color:#444;font-weight:400;transform:scaleX(0.9259);transform-origin:0 0;">2 взр.</div>
<div class="t" style="left:1625.0px;width:200px;text-align:right;top:991.8px;font-size:21.49px;color:#333;font-weight:400;transform:scaleX(0.9259);transform-origin:100% 0;">311 600 ₽</div>
<div class="t" style="left:1853.0px;width:100px;text-align:right;top:992.1px;font-size:21.17px;color:#333;font-weight:400;transform:scaleX(0.9259);transform-origin:100% 0;">0 ₽</div>
<div class="b" style="left:1963.0px;top:993.0px;width:9.0px;height:18.0px;background:#f5ec00;border-radius:3px"></div>
<div class="t" style="left:1975.5px;top:992.1px;font-size:21.17px;color:#111;font-weight:400;transform:scaleX(0.7822);transform-origin:0 0;">RACK</div>
<div class="t" style="left:2093.0px;top:991.8px;font-size:21.49px;color:#444;font-weight:400;transform:scaleX(0.9356);transform-origin:0 0;">39 но...</div>
<div class="t" style="left:2183.3px;top:992.1px;font-size:21.17px;color:#333;font-weight:400;transform:scaleX(0.8605);transform-origin:0 0;">FB, ОБЕД</div>
<div class="t" style="left:2559.5px;top:992.1px;font-size:21.17px;color:#3a3a3a;font-weight:400;transform:scaleX(0.9259);transform-origin:0 0;">Занят</div>
<div class="b" style="left:2647.0px;top:987.5px;width:141.0px;height:30.5px;background:#a8ebc0;border:2px solid #68d08f;border-radius:3px;box-sizing:border-box"></div>
<div class="t" style="left:2658.6px;top:991.9px;font-size:21.38px;color:#567a66;font-weight:400;transform:scaleX(0.9259);transform-origin:0 0;">Проживание</div>
<div class="b" style="left:354.0px;top:1024.0px;width:189.0px;height:42.0px;background:#f2f2f2"></div>
<div class="b" style="left:548.0px;top:1024.0px;width:2272.0px;height:42.0px;background:#f2f2f2"></div>
<div class="b" style="left:367.5px;top:1034.5px;width:21.0px;height:21.0px;background:#fff;border:1.6px solid #c2c2c2;box-sizing:border-box"></div>
<div class="t" style="left:409.5px;top:1033.5px;font-size:21.82px;color:#2c6aad;font-weight:400;transform:scaleX(0.9259);transform-origin:0 0;">1217947</div>
<svg class="b" style="left:495.0px;top:1031.0px" width="27" height="25" viewBox="0 0 27 25"><g fill="#b8c5dc" stroke="#f2f2f2" stroke-width="1.1"><circle cx="6" cy="4" r="4.1"/><circle cx="21" cy="4" r="4.1"/><rect x="0.5" y="6.8" width="9" height="11" rx="4.2"/><rect x="17.5" y="6.8" width="9" height="11" rx="4.2"/><path d="M3.6 25v-4.6c0-4 3.2-6.6 6.8-6.6h6.2c3.6 0 6.8 2.6 6.8 6.6v2.2c0 1.4-1 2.4-2.4 2.4z"/><circle cx="13.5" cy="9" r="5.9"/></g></svg>
<div class="t" style="left:555.8px;top:1034.2px;font-size:21.06px;color:#3470ad;font-weight:400;transform:scaleX(0.8407);transform-origin:0 0;">Гость 1</div>
<div class="t" style="left:896.6px;top:1035.1px;font-size:21.17px;color:#2164b4;font-weight:400;letter-spacing:0.6pxtransform:scaleX(0.9259);transform-origin:0 0;">Фокусники</div>
<div class="b" style="left:896.6px;top:1054.6px;width:101.0px;height:1.3px;background:#2a6cc0"></div>
<div class="t" style="left:1109.7px;top:1034.1px;font-size:21.17px;color:#3a3a3a;font-weight:400;transform:scaleX(0.9259);transform-origin:0 0;">06.12.2025</div>
<div class="t" style="left:1229.6px;top:1034.1px;font-size:21.17px;color:#3a3a3a;font-weight:400;transform:scaleX(0.9259);transform-origin:0 0;">14.01.2026</div>
<div class="b" style="left:1347.0px;top:1035.0px;width:9.0px;height:18.0px;background:#4aa6c8;border-radius:3px"></div>
<div class="t" style="left:1359.0px;top:1034.1px;font-size:21.17px;color:#111;font-weight:400;transform:scaleX(0.8548);transform-origin:0 0;">DEL</div>
<div class="t" style="left:1481.5px;top:1034.1px;font-size:21.17px;color:#000;font-weight:400;transform:scaleX(0.9259);transform-origin:0 0;">508</div>
<div class="t" style="left:1574.0px;top:1033.5px;font-size:21.82px;color:#444;font-weight:400;transform:scaleX(0.9259);transform-origin:0 0;">2 взр.</div>
<div class="t" style="left:1625.0px;width:200px;text-align:right;top:1033.8px;font-size:21.49px;color:#333;font-weight:400;transform:scaleX(0.9259);transform-origin:100% 0;">311 600 ₽</div>
<div class="t" style="left:1853.0px;width:100px;text-align:right;top:1034.1px;font-size:21.17px;color:#333;font-weight:400;transform:scaleX(0.9259);transform-origin:100% 0;">0 ₽</div>
<div class="b" style="left:1963.0px;top:1035.0px;width:9.0px;height:18.0px;background:#f5ec00;border-radius:3px"></div>
<div class="t" style="left:1975.5px;top:1034.1px;font-size:21.17px;color:#111;font-weight:400;transform:scaleX(0.7822);transform-origin:0 0;">RACK</div>
<div class="t" style="left:2093.0px;top:1033.8px;font-size:21.49px;color:#444;font-weight:400;transform:scaleX(0.9356);transform-origin:0 0;">39 но...</div>
<div class="t" style="left:2183.3px;top:1034.1px;font-size:21.17px;color:#333;font-weight:400;transform:scaleX(0.8605);transform-origin:0 0;">FB, ОБЕД</div>
<div class="t" style="left:2559.5px;top:1034.1px;font-size:21.17px;color:#3a3a3a;font-weight:400;transform:scaleX(0.9259);transform-origin:0 0;">Занят</div>
<div class="b" style="left:2647.0px;top:1029.5px;width:141.0px;height:30.5px;background:#a0dfb7;border:2px solid #68d08f;border-radius:3px;box-sizing:border-box"></div>
<div class="t" style="left:2658.6px;top:1033.9px;font-size:21.38px;color:#567a66;font-weight:400;transform:scaleX(0.9259);transform-origin:0 0;">Проживание</div>
<div class="b" style="left:367.5px;top:1076.5px;width:21.0px;height:21.0px;background:#fff;border:1.6px solid #c2c2c2;box-sizing:border-box"></div>
<div class="t" style="left:409.5px;top:1075.5px;font-size:21.82px;color:#2c6aad;font-weight:400;transform:scaleX(0.9259);transform-origin:0 0;">1217946</div>
<svg class="b" style="left:495.0px;top:1073.0px" width="27" height="25" viewBox="0 0 27 25"><g fill="#b8c5dc" stroke="#ffffff" stroke-width="1.1"><circle cx="6" cy="4" r="4.1"/><circle cx="21" cy="4" r="4.1"/><rect x="0.5" y="6.8" width="9" height="11" rx="4.2"/><rect x="17.5" y="6.8" width="9" height="11" rx="4.2"/><path d="M3.6 25v-4.6c0-4 3.2-6.6 6.8-6.6h6.2c3.6 0 6.8 2.6 6.8 6.6v2.2c0 1.4-1 2.4-2.4 2.4z"/><circle cx="13.5" cy="9" r="5.9"/></g></svg>
<div class="t" style="left:555.8px;top:1076.2px;font-size:21.06px;color:#3470ad;font-weight:400;transform:scaleX(0.8407);transform-origin:0 0;">Гость 2</div>
<div class="t" style="left:896.6px;top:1077.1px;font-size:21.17px;color:#2164b4;font-weight:400;letter-spacing:0.6pxtransform:scaleX(0.9259);transform-origin:0 0;">Фокусники</div>
<div class="b" style="left:896.6px;top:1096.6px;width:101.0px;height:1.3px;background:#2a6cc0"></div>
<div class="t" style="left:1109.7px;top:1076.1px;font-size:21.17px;color:#3a3a3a;font-weight:400;transform:scaleX(0.9259);transform-origin:0 0;">06.12.2025</div>
<div class="t" style="left:1229.6px;top:1076.1px;font-size:21.17px;color:#3a3a3a;font-weight:400;transform:scaleX(0.9259);transform-origin:0 0;">14.01.2026</div>
<div class="b" style="left:1347.0px;top:1077.0px;width:9.0px;height:18.0px;background:#dd7424;border-radius:3px"></div>
<div class="t" style="left:1359.0px;top:1076.1px;font-size:21.17px;color:#111;font-weight:400;transform:scaleX(0.8329);transform-origin:0 0;">STT</div>
<div class="t" style="left:1481.5px;top:1076.1px;font-size:21.17px;color:#000;font-weight:400;transform:scaleX(0.9259);transform-origin:0 0;">510</div>
<div class="t" style="left:1574.0px;top:1075.5px;font-size:21.82px;color:#444;font-weight:400;transform:scaleX(0.9259);transform-origin:0 0;">2 взр.</div>
<div class="t" style="left:1625.0px;width:200px;text-align:right;top:1075.8px;font-size:21.49px;color:#333;font-weight:400;transform:scaleX(0.9259);transform-origin:100% 0;">273 600 ₽</div>
<div class="t" style="left:1853.0px;width:100px;text-align:right;top:1076.1px;font-size:21.17px;color:#333;font-weight:400;transform:scaleX(0.9259);transform-origin:100% 0;">0 ₽</div>
<div class="b" style="left:1963.0px;top:1077.0px;width:9.0px;height:18.0px;background:#f5ec00;border-radius:3px"></div>
<div class="t" style="left:1975.5px;top:1076.1px;font-size:21.17px;color:#111;font-weight:400;transform:scaleX(0.7822);transform-origin:0 0;">RACK</div>
<div class="t" style="left:2093.0px;top:1075.8px;font-size:21.49px;color:#444;font-weight:400;transform:scaleX(0.9356);transform-origin:0 0;">39 но...</div>
<div class="t" style="left:2183.3px;top:1076.1px;font-size:21.17px;color:#333;font-weight:400;transform:scaleX(0.8605);transform-origin:0 0;">FB, ОБЕД</div>
<div class="t" style="left:2559.5px;top:1076.1px;font-size:21.17px;color:#3a3a3a;font-weight:400;transform:scaleX(0.9259);transform-origin:0 0;">Занят</div>
<div class="b" style="left:2647.0px;top:1071.5px;width:141.0px;height:30.5px;background:#a8ebc0;border:2px solid #68d08f;border-radius:3px;box-sizing:border-box"></div>
<div class="t" style="left:2658.6px;top:1075.9px;font-size:21.38px;color:#567a66;font-weight:400;transform:scaleX(0.9259);transform-origin:0 0;">Проживание</div>
<div class="b" style="left:354.0px;top:1108.0px;width:189.0px;height:42.0px;background:#f2f2f2"></div>
<div class="b" style="left:548.0px;top:1108.0px;width:2272.0px;height:42.0px;background:#f2f2f2"></div>
<div class="b" style="left:367.5px;top:1118.5px;width:21.0px;height:21.0px;background:#fff;border:1.6px solid #c2c2c2;box-sizing:border-box"></div>
<div class="t" style="left:409.5px;top:1117.5px;font-size:21.82px;color:#2c6aad;font-weight:400;transform:scaleX(0.9259);transform-origin:0 0;">1217946</div>
<svg class="b" style="left:495.0px;top:1115.0px" width="27" height="25" viewBox="0 0 27 25"><g fill="#b8c5dc" stroke="#f2f2f2" stroke-width="1.1"><circle cx="6" cy="4" r="4.1"/><circle cx="21" cy="4" r="4.1"/><rect x="0.5" y="6.8" width="9" height="11" rx="4.2"/><rect x="17.5" y="6.8" width="9" height="11" rx="4.2"/><path d="M3.6 25v-4.6c0-4 3.2-6.6 6.8-6.6h6.2c3.6 0 6.8 2.6 6.8 6.6v2.2c0 1.4-1 2.4-2.4 2.4z"/><circle cx="13.5" cy="9" r="5.9"/></g></svg>
<div class="t" style="left:555.8px;top:1118.2px;font-size:21.06px;color:#3470ad;font-weight:400;transform:scaleX(0.8407);transform-origin:0 0;">Гость 1</div>
<div class="t" style="left:896.6px;top:1119.1px;font-size:21.17px;color:#2164b4;font-weight:400;letter-spacing:0.6pxtransform:scaleX(0.9259);transform-origin:0 0;">Фокусники</div>
<div class="b" style="left:896.6px;top:1138.6px;width:101.0px;height:1.3px;background:#2a6cc0"></div>
<div class="t" style="left:1109.7px;top:1118.1px;font-size:21.17px;color:#3a3a3a;font-weight:400;transform:scaleX(0.9259);transform-origin:0 0;">06.12.2025</div>
<div class="t" style="left:1229.6px;top:1118.1px;font-size:21.17px;color:#3a3a3a;font-weight:400;transform:scaleX(0.9259);transform-origin:0 0;">14.01.2026</div>
<div class="b" style="left:1347.0px;top:1119.0px;width:9.0px;height:18.0px;background:#dd7424;border-radius:3px"></div>
<div class="t" style="left:1359.0px;top:1118.1px;font-size:21.17px;color:#111;font-weight:400;transform:scaleX(0.8329);transform-origin:0 0;">STT</div>
<div class="t" style="left:1481.5px;top:1118.1px;font-size:21.17px;color:#000;font-weight:400;transform:scaleX(0.9259);transform-origin:0 0;">510</div>
<div class="t" style="left:1574.0px;top:1117.5px;font-size:21.82px;color:#444;font-weight:400;transform:scaleX(0.9259);transform-origin:0 0;">2 взр.</div>
<div class="t" style="left:1625.0px;width:200px;text-align:right;top:1117.8px;font-size:21.49px;color:#333;font-weight:400;transform:scaleX(0.9259);transform-origin:100% 0;">273 600 ₽</div>
<div class="t" style="left:1853.0px;width:100px;text-align:right;top:1118.1px;font-size:21.17px;color:#333;font-weight:400;transform:scaleX(0.9259);transform-origin:100% 0;">0 ₽</div>
<div class="b" style="left:1963.0px;top:1119.0px;width:9.0px;height:18.0px;background:#f5ec00;border-radius:3px"></div>
<div class="t" style="left:1975.5px;top:1118.1px;font-size:21.17px;color:#111;font-weight:400;transform:scaleX(0.7822);transform-origin:0 0;">RACK</div>
<div class="t" style="left:2093.0px;top:1117.8px;font-size:21.49px;color:#444;font-weight:400;transform:scaleX(0.9356);transform-origin:0 0;">39 но...</div>
<div class="t" style="left:2183.3px;top:1118.1px;font-size:21.17px;color:#333;font-weight:400;transform:scaleX(0.8605);transform-origin:0 0;">FB, ОБЕД</div>
<div class="t" style="left:2559.5px;top:1118.1px;font-size:21.17px;color:#3a3a3a;font-weight:400;transform:scaleX(0.9259);transform-origin:0 0;">Занят</div>
<div class="b" style="left:2647.0px;top:1113.5px;width:141.0px;height:30.5px;background:#a0dfb7;border:2px solid #68d08f;border-radius:3px;box-sizing:border-box"></div>
<div class="t" style="left:2658.6px;top:1117.9px;font-size:21.38px;color:#567a66;font-weight:400;transform:scaleX(0.9259);transform-origin:0 0;">Проживание</div>
<div class="b" style="left:367.5px;top:1160.5px;width:21.0px;height:21.0px;background:#fff;border:1.6px solid #c2c2c2;box-sizing:border-box"></div>
<div class="t" style="left:409.5px;top:1159.5px;font-size:21.82px;color:#2c6aad;font-weight:400;transform:scaleX(0.9259);transform-origin:0 0;">1217945</div>
<svg class="b" style="left:495.0px;top:1157.0px" width="27" height="25" viewBox="0 0 27 25"><g fill="#b8c5dc" stroke="#ffffff" stroke-width="1.1"><circle cx="6" cy="4" r="4.1"/><circle cx="21" cy="4" r="4.1"/><rect x="0.5" y="6.8" width="9" height="11" rx="4.2"/><rect x="17.5" y="6.8" width="9" height="11" rx="4.2"/><path d="M3.6 25v-4.6c0-4 3.2-6.6 6.8-6.6h6.2c3.6 0 6.8 2.6 6.8 6.6v2.2c0 1.4-1 2.4-2.4 2.4z"/><circle cx="13.5" cy="9" r="5.9"/></g></svg>
<div class="t" style="left:555.8px;top:1160.2px;font-size:21.06px;color:#3470ad;font-weight:400;transform:scaleX(0.8407);transform-origin:0 0;">Гость 2</div>
<div class="t" style="left:896.6px;top:1161.1px;font-size:21.17px;color:#2164b4;font-weight:400;letter-spacing:0.6pxtransform:scaleX(0.9259);transform-origin:0 0;">Фокусники</div>
<div class="b" style="left:896.6px;top:1180.6px;width:101.0px;height:1.3px;background:#2a6cc0"></div>
<div class="t" style="left:1109.7px;top:1160.1px;font-size:21.17px;color:#3a3a3a;font-weight:400;transform:scaleX(0.9259);transform-origin:0 0;">06.12.2025</div>
<div class="t" style="left:1229.6px;top:1160.1px;font-size:21.17px;color:#3a3a3a;font-weight:400;transform:scaleX(0.9259);transform-origin:0 0;">14.01.2026</div>
<div class="b" style="left:1347.0px;top:1161.0px;width:9.0px;height:18.0px;background:#dd7424;border-radius:3px"></div>
<div class="t" style="left:1359.0px;top:1160.1px;font-size:21.17px;color:#111;font-weight:400;transform:scaleX(0.8329);transform-origin:0 0;">STT</div>
<div class="t" style="left:1481.5px;top:1160.1px;font-size:21.17px;color:#000;font-weight:400;transform:scaleX(0.9259);transform-origin:0 0;">504</div>
<div class="t" style="left:1574.0px;top:1159.5px;font-size:21.82px;color:#444;font-weight:400;transform:scaleX(0.9259);transform-origin:0 0;">2 взр.</div>
<div class="t" style="left:1625.0px;width:200px;text-align:right;top:1159.8px;font-size:21.49px;color:#333;font-weight:400;transform:scaleX(0.9259);transform-origin:100% 0;">273 600 ₽</div>
<div class="t" style="left:1853.0px;width:100px;text-align:right;top:1160.1px;font-size:21.17px;color:#333;font-weight:400;transform:scaleX(0.9259);transform-origin:100% 0;">0 ₽</div>
<div class="b" style="left:1963.0px;top:1161.0px;width:9.0px;height:18.0px;background:#f5ec00;border-radius:3px"></div>
<div class="t" style="left:1975.5px;top:1160.1px;font-size:21.17px;color:#111;font-weight:400;transform:scaleX(0.7822);transform-origin:0 0;">RACK</div>
<div class="t" style="left:2093.0px;top:1159.8px;font-size:21.49px;color:#444;font-weight:400;transform:scaleX(0.9356);transform-origin:0 0;">39 но...</div>
<div class="t" style="left:2183.3px;top:1160.1px;font-size:21.17px;color:#333;font-weight:400;transform:scaleX(0.8605);transform-origin:0 0;">FB, ОБЕД</div>
<div class="t" style="left:2559.5px;top:1160.1px;font-size:21.17px;color:#3a3a3a;font-weight:400;transform:scaleX(0.9259);transform-origin:0 0;">Занят</div>
<div class="b" style="left:2647.0px;top:1155.5px;width:141.0px;height:30.5px;background:#a8ebc0;border:2px solid #68d08f;border-radius:3px;box-sizing:border-box"></div>
<div class="t" style="left:2658.6px;top:1159.9px;font-size:21.38px;color:#567a66;font-weight:400;transform:scaleX(0.9259);transform-origin:0 0;">Проживание</div>
<div class="b" style="left:354.0px;top:1192.0px;width:189.0px;height:42.0px;background:#f2f2f2"></div>
<div class="b" style="left:548.0px;top:1192.0px;width:2272.0px;height:42.0px;background:#f2f2f2"></div>
<div class="b" style="left:367.5px;top:1202.5px;width:21.0px;height:21.0px;background:#fff;border:1.6px solid #c2c2c2;box-sizing:border-box"></div>
<div class="t" style="left:409.5px;top:1201.5px;font-size:21.82px;color:#2c6aad;font-weight:400;transform:scaleX(0.9259);transform-origin:0 0;">1217945</div>
<svg class="b" style="left:495.0px;top:1199.0px" width="27" height="25" viewBox="0 0 27 25"><g fill="#b8c5dc" stroke="#f2f2f2" stroke-width="1.1"><circle cx="6" cy="4" r="4.1"/><circle cx="21" cy="4" r="4.1"/><rect x="0.5" y="6.8" width="9" height="11" rx="4.2"/><rect x="17.5" y="6.8" width="9" height="11" rx="4.2"/><path d="M3.6 25v-4.6c0-4 3.2-6.6 6.8-6.6h6.2c3.6 0 6.8 2.6 6.8 6.6v2.2c0 1.4-1 2.4-2.4 2.4z"/><circle cx="13.5" cy="9" r="5.9"/></g></svg>
<div class="t" style="left:555.8px;top:1202.2px;font-size:21.06px;color:#3470ad;font-weight:400;transform:scaleX(0.8407);transform-origin:0 0;">Гость 1</div>
<div class="t" style="left:896.6px;top:1203.1px;font-size:21.17px;color:#2164b4;font-weight:400;letter-spacing:0.6pxtransform:scaleX(0.9259);transform-origin:0 0;">Фокусники</div>
<div class="b" style="left:896.6px;top:1222.6px;width:101.0px;height:1.3px;background:#2a6cc0"></div>
<div class="t" style="left:1109.7px;top:1202.1px;font-size:21.17px;color:#3a3a3a;font-weight:400;transform:scaleX(0.9259);transform-origin:0 0;">06.12.2025</div>
<div class="t" style="left:1229.6px;top:1202.1px;font-size:21.17px;color:#3a3a3a;font-weight:400;transform:scaleX(0.9259);transform-origin:0 0;">14.01.2026</div>
<div class="b" style="left:1347.0px;top:1203.0px;width:9.0px;height:18.0px;background:#dd7424;border-radius:3px"></div>
<div class="t" style="left:1359.0px;top:1202.1px;font-size:21.17px;color:#111;font-weight:400;transform:scaleX(0.8329);transform-origin:0 0;">STT</div>
<div class="t" style="left:1481.5px;top:1202.1px;font-size:21.17px;color:#000;font-weight:400;transform:scaleX(0.9259);transform-origin:0 0;">504</div>
<div class="t" style="left:1574.0px;top:1201.5px;font-size:21.82px;color:#444;font-weight:400;transform:scaleX(0.9259);transform-origin:0 0;">2 взр.</div>
<div class="t" style="left:1625.0px;width:200px;text-align:right;top:1201.8px;font-size:21.49px;color:#333;font-weight:400;transform:scaleX(0.9259);transform-origin:100% 0;">273 600 ₽</div>
<div class="t" style="left:1853.0px;width:100px;text-align:right;top:1202.1px;font-size:21.17px;color:#333;font-weight:400;transform:scaleX(0.9259);transform-origin:100% 0;">0 ₽</div>
<div class="b" style="left:1963.0px;top:1203.0px;width:9.0px;height:18.0px;background:#f5ec00;border-radius:3px"></div>
<div class="t" style="left:1975.5px;top:1202.1px;font-size:21.17px;color:#111;font-weight:400;transform:scaleX(0.7822);transform-origin:0 0;">RACK</div>
<div class="t" style="left:2093.0px;top:1201.8px;font-size:21.49px;color:#444;font-weight:400;transform:scaleX(0.9356);transform-origin:0 0;">39 но...</div>
<div class="t" style="left:2183.3px;top:1202.1px;font-size:21.17px;color:#333;font-weight:400;transform:scaleX(0.8605);transform-origin:0 0;">FB, ОБЕД</div>
<div class="t" style="left:2559.5px;top:1202.1px;font-size:21.17px;color:#3a3a3a;font-weight:400;transform:scaleX(0.9259);transform-origin:0 0;">Занят</div>
<div class="b" style="left:2647.0px;top:1197.5px;width:141.0px;height:30.5px;background:#a0dfb7;border:2px solid #68d08f;border-radius:3px;box-sizing:border-box"></div>
<div class="t" style="left:2658.6px;top:1201.9px;font-size:21.38px;color:#567a66;font-weight:400;transform:scaleX(0.9259);transform-origin:0 0;">Проживание</div>
<div class="b" style="left:367.5px;top:1244.5px;width:21.0px;height:21.0px;background:#fff;border:1.6px solid #c2c2c2;box-sizing:border-box"></div>
<div class="t" style="left:409.5px;top:1243.5px;font-size:21.82px;color:#2c6aad;font-weight:400;transform:scaleX(0.9259);transform-origin:0 0;">1217944</div>
<svg class="b" style="left:495.0px;top:1241.0px" width="27" height="25" viewBox="0 0 27 25"><g fill="#b8c5dc" stroke="#ffffff" stroke-width="1.1"><circle cx="6" cy="4" r="4.1"/><circle cx="21" cy="4" r="4.1"/><rect x="0.5" y="6.8" width="9" height="11" rx="4.2"/><rect x="17.5" y="6.8" width="9" height="11" rx="4.2"/><path d="M3.6 25v-4.6c0-4 3.2-6.6 6.8-6.6h6.2c3.6 0 6.8 2.6 6.8 6.6v2.2c0 1.4-1 2.4-2.4 2.4z"/><circle cx="13.5" cy="9" r="5.9"/></g></svg>
<div class="t" style="left:555.8px;top:1244.2px;font-size:21.06px;color:#3470ad;font-weight:400;transform:scaleX(0.8407);transform-origin:0 0;">Гость 2</div>
<div class="t" style="left:896.6px;top:1245.1px;font-size:21.17px;color:#2164b4;font-weight:400;letter-spacing:0.6pxtransform:scaleX(0.9259);transform-origin:0 0;">Фокусники</div>
<div class="b" style="left:896.6px;top:1264.6px;width:101.0px;height:1.3px;background:#2a6cc0"></div>
<div class="t" style="left:1109.7px;top:1244.1px;font-size:21.17px;color:#3a3a3a;font-weight:400;transform:scaleX(0.9259);transform-origin:0 0;">05.12.2025</div>
<div class="t" style="left:1229.6px;top:1244.1px;font-size:21.17px;color:#3a3a3a;font-weight:400;transform:scaleX(0.9259);transform-origin:0 0;">13.01.2026</div>
<div class="b" style="left:1347.0px;top:1245.0px;width:9.0px;height:18.0px;background:#c9a8ec;border-radius:3px"></div>
<div class="t" style="left:1359.0px;top:1244.1px;font-size:21.17px;color:#111;font-weight:400;transform:scaleX(0.8608);transform-origin:0 0;">LUXS</div>
<div class="t" style="left:1481.5px;top:1244.1px;font-size:21.17px;color:#000;font-weight:400;transform:scaleX(0.9259);transform-origin:0 0;">604</div>
<div class="t" style="left:1574.0px;top:1243.5px;font-size:21.82px;color:#444;font-weight:400;transform:scaleX(0.9259);transform-origin:0 0;">2 взр.</div>
<div class="t" style="left:1625.0px;width:200px;text-align:right;top:1243.8px;font-size:21.49px;color:#333;font-weight:400;transform:scaleX(0.9259);transform-origin:100% 0;">709 800 ₽</div>
<div class="t" style="left:1853.0px;width:100px;text-align:right;top:1244.1px;font-size:21.17px;color:#333;font-weight:400;transform:scaleX(0.9259);transform-origin:100% 0;">0 ₽</div>
<div class="b" style="left:1963.0px;top:1245.0px;width:9.0px;height:18.0px;background:#f5ec00;border-radius:3px"></div>
<div class="t" style="left:1975.5px;top:1244.1px;font-size:21.17px;color:#111;font-weight:400;transform:scaleX(0.7822);transform-origin:0 0;">RACK</div>
<div class="t" style="left:2093.0px;top:1243.8px;font-size:21.49px;color:#444;font-weight:400;transform:scaleX(0.9356);transform-origin:0 0;">39 но...</div>
<div class="t" style="left:2183.3px;top:1244.1px;font-size:21.17px;color:#333;font-weight:400;transform:scaleX(0.8605);transform-origin:0 0;">FB, ОБЕД</div>
<div class="t" style="left:2559.5px;top:1244.1px;font-size:21.17px;color:#3a3a3a;font-weight:400;transform:scaleX(0.9259);transform-origin:0 0;">Грязн...</div>
<div class="b" style="left:2647.0px;top:1239.5px;width:141.0px;height:30.5px;background:#a8ebc0;border:2px solid #68d08f;border-radius:3px;box-sizing:border-box"></div>
<div class="t" style="left:2658.6px;top:1243.9px;font-size:21.38px;color:#567a66;font-weight:400;transform:scaleX(0.9259);transform-origin:0 0;">Проживание</div>
<div class="b" style="left:354.0px;top:1276.0px;width:189.0px;height:42.0px;background:#f2f2f2"></div>
<div class="b" style="left:548.0px;top:1276.0px;width:2272.0px;height:42.0px;background:#f2f2f2"></div>
<div class="b" style="left:367.5px;top:1286.5px;width:21.0px;height:21.0px;background:#fff;border:1.6px solid #c2c2c2;box-sizing:border-box"></div>
<div class="t" style="left:409.5px;top:1285.5px;font-size:21.82px;color:#2c6aad;font-weight:400;transform:scaleX(0.9259);transform-origin:0 0;">1217944</div>
<svg class="b" style="left:495.0px;top:1283.0px" width="27" height="25" viewBox="0 0 27 25"><g fill="#b8c5dc" stroke="#f2f2f2" stroke-width="1.1"><circle cx="6" cy="4" r="4.1"/><circle cx="21" cy="4" r="4.1"/><rect x="0.5" y="6.8" width="9" height="11" rx="4.2"/><rect x="17.5" y="6.8" width="9" height="11" rx="4.2"/><path d="M3.6 25v-4.6c0-4 3.2-6.6 6.8-6.6h6.2c3.6 0 6.8 2.6 6.8 6.6v2.2c0 1.4-1 2.4-2.4 2.4z"/><circle cx="13.5" cy="9" r="5.9"/></g></svg>
<div class="t" style="left:555.8px;top:1286.2px;font-size:21.06px;color:#3470ad;font-weight:400;transform:scaleX(0.8407);transform-origin:0 0;">Гость 1</div>
<div class="t" style="left:896.6px;top:1287.1px;font-size:21.17px;color:#2164b4;font-weight:400;letter-spacing:0.6pxtransform:scaleX(0.9259);transform-origin:0 0;">Фокусники</div>
<div class="b" style="left:896.6px;top:1306.6px;width:101.0px;height:1.3px;background:#2a6cc0"></div>
<div class="t" style="left:1109.7px;top:1286.1px;font-size:21.17px;color:#3a3a3a;font-weight:400;transform:scaleX(0.9259);transform-origin:0 0;">05.12.2025</div>
<div class="t" style="left:1229.6px;top:1286.1px;font-size:21.17px;color:#3a3a3a;font-weight:400;transform:scaleX(0.9259);transform-origin:0 0;">13.01.2026</div>
<div class="b" style="left:1347.0px;top:1287.0px;width:9.0px;height:18.0px;background:#c9a8ec;border-radius:3px"></div>
<div class="t" style="left:1359.0px;top:1286.1px;font-size:21.17px;color:#111;font-weight:400;transform:scaleX(0.8608);transform-origin:0 0;">LUXS</div>
<div class="t" style="left:1481.5px;top:1286.1px;font-size:21.17px;color:#000;font-weight:400;transform:scaleX(0.9259);transform-origin:0 0;">604</div>
<div class="t" style="left:1574.0px;top:1285.5px;font-size:21.82px;color:#444;font-weight:400;transform:scaleX(0.9259);transform-origin:0 0;">2 взр.</div>
<div class="t" style="left:1625.0px;width:200px;text-align:right;top:1285.8px;font-size:21.49px;color:#333;font-weight:400;transform:scaleX(0.9259);transform-origin:100% 0;">709 800 ₽</div>
<div class="t" style="left:1853.0px;width:100px;text-align:right;top:1286.1px;font-size:21.17px;color:#333;font-weight:400;transform:scaleX(0.9259);transform-origin:100% 0;">0 ₽</div>
<div class="b" style="left:1963.0px;top:1287.0px;width:9.0px;height:18.0px;background:#f5ec00;border-radius:3px"></div>
<div class="t" style="left:1975.5px;top:1286.1px;font-size:21.17px;color:#111;font-weight:400;transform:scaleX(0.7822);transform-origin:0 0;">RACK</div>
<div class="t" style="left:2093.0px;top:1285.8px;font-size:21.49px;color:#444;font-weight:400;transform:scaleX(0.9356);transform-origin:0 0;">39 но...</div>
<div class="t" style="left:2183.3px;top:1286.1px;font-size:21.17px;color:#333;font-weight:400;transform:scaleX(0.8605);transform-origin:0 0;">FB, ОБЕД</div>
<div class="t" style="left:2559.5px;top:1286.1px;font-size:21.17px;color:#3a3a3a;font-weight:400;transform:scaleX(0.9259);transform-origin:0 0;">Грязн...</div>
<div class="b" style="left:2647.0px;top:1281.5px;width:141.0px;height:30.5px;background:#a0dfb7;border:2px solid #68d08f;border-radius:3px;box-sizing:border-box"></div>
<div class="t" style="left:2658.6px;top:1285.9px;font-size:21.38px;color:#567a66;font-weight:400;transform:scaleX(0.9259);transform-origin:0 0;">Проживание</div>
<div class="b" style="left:367.5px;top:1328.5px;width:21.0px;height:21.0px;background:#fff;border:1.6px solid #c2c2c2;box-sizing:border-box"></div>
<div class="t" style="left:409.5px;top:1327.5px;font-size:21.82px;color:#2c6aad;font-weight:400;transform:scaleX(0.9259);transform-origin:0 0;">1217943</div>
<svg class="b" style="left:495.0px;top:1325.0px" width="27" height="25" viewBox="0 0 27 25"><g fill="#b8c5dc" stroke="#ffffff" stroke-width="1.1"><circle cx="6" cy="4" r="4.1"/><circle cx="21" cy="4" r="4.1"/><rect x="0.5" y="6.8" width="9" height="11" rx="4.2"/><rect x="17.5" y="6.8" width="9" height="11" rx="4.2"/><path d="M3.6 25v-4.6c0-4 3.2-6.6 6.8-6.6h6.2c3.6 0 6.8 2.6 6.8 6.6v2.2c0 1.4-1 2.4-2.4 2.4z"/><circle cx="13.5" cy="9" r="5.9"/></g></svg>
<div class="t" style="left:555.8px;top:1328.2px;font-size:21.06px;color:#3470ad;font-weight:400;transform:scaleX(0.8407);transform-origin:0 0;">Гость 2</div>
<div class="t" style="left:896.6px;top:1329.1px;font-size:21.17px;color:#2164b4;font-weight:400;letter-spacing:0.6pxtransform:scaleX(0.9259);transform-origin:0 0;">Фокусники</div>
<div class="b" style="left:896.6px;top:1348.6px;width:101.0px;height:1.3px;background:#2a6cc0"></div>
<div class="t" style="left:1109.7px;top:1328.1px;font-size:21.17px;color:#3a3a3a;font-weight:400;transform:scaleX(0.9259);transform-origin:0 0;">05.12.2025</div>
<div class="t" style="left:1229.6px;top:1328.1px;font-size:21.17px;color:#3a3a3a;font-weight:400;transform:scaleX(0.9259);transform-origin:0 0;">13.01.2026</div>
<div class="b" style="left:1347.0px;top:1329.0px;width:9.0px;height:18.0px;background:#dd7424;border-radius:3px"></div>
<div class="t" style="left:1359.0px;top:1328.1px;font-size:21.17px;color:#111;font-weight:400;transform:scaleX(0.8329);transform-origin:0 0;">STT</div>
<div class="t" style="left:1481.5px;top:1328.1px;font-size:21.17px;color:#000;font-weight:400;transform:scaleX(0.9259);transform-origin:0 0;">217</div>
<div class="t" style="left:1574.0px;top:1327.5px;font-size:21.82px;color:#444;font-weight:400;transform:scaleX(0.9259);transform-origin:0 0;">2 взр.</div>
<div class="t" style="left:1625.0px;width:200px;text-align:right;top:1327.8px;font-size:21.49px;color:#333;font-weight:400;transform:scaleX(0.9259);transform-origin:100% 0;">280 800 ₽</div>
<div class="t" style="left:1853.0px;width:100px;text-align:right;top:1328.1px;font-size:21.17px;color:#333;font-weight:400;transform:scaleX(0.9259);transform-origin:100% 0;">0 ₽</div>
<div class="b" style="left:1963.0px;top:1329.0px;width:9.0px;height:18.0px;background:#f5ec00;border-radius:3px"></div>
<div class="t" style="left:1975.5px;top:1328.1px;font-size:21.17px;color:#111;font-weight:400;transform:scaleX(0.7822);transform-origin:0 0;">RACK</div>
<div class="t" style="left:2093.0px;top:1327.8px;font-size:21.49px;color:#444;font-weight:400;transform:scaleX(0.9356);transform-origin:0 0;">39 но...</div>
<div class="t" style="left:2183.3px;top:1328.1px;font-size:21.17px;color:#333;font-weight:400;transform:scaleX(0.8605);transform-origin:0 0;">FB, ОБЕД</div>
<div class="t" style="left:2559.5px;top:1328.1px;font-size:21.17px;color:#3a3a3a;font-weight:400;transform:scaleX(0.9259);transform-origin:0 0;">Грязн...</div>
<div class="b" style="left:2647.0px;top:1323.5px;width:141.0px;height:30.5px;background:#a8ebc0;border:2px solid #68d08f;border-radius:3px;box-sizing:border-box"></div>
<div class="t" style="left:2658.6px;top:1327.9px;font-size:21.38px;color:#567a66;font-weight:400;transform:scaleX(0.9259);transform-origin:0 0;">Проживание</div>
<div class="b" style="left:354.0px;top:1360.0px;width:189.0px;height:42.0px;background:#f2f2f2"></div>
<div class="b" style="left:548.0px;top:1360.0px;width:2272.0px;height:42.0px;background:#f2f2f2"></div>
<div class="b" style="left:367.5px;top:1370.5px;width:21.0px;height:21.0px;background:#fff;border:1.6px solid #c2c2c2;box-sizing:border-box"></div>
<div class="t" style="left:409.5px;top:1369.5px;font-size:21.82px;color:#2c6aad;font-weight:400;transform:scaleX(0.9259);transform-origin:0 0;">1217943</div>
<svg class="b" style="left:495.0px;top:1367.0px" width="27" height="25" viewBox="0 0 27 25"><g fill="#b8c5dc" stroke="#f2f2f2" stroke-width="1.1"><circle cx="6" cy="4" r="4.1"/><circle cx="21" cy="4" r="4.1"/><rect x="0.5" y="6.8" width="9" height="11" rx="4.2"/><rect x="17.5" y="6.8" width="9" height="11" rx="4.2"/><path d="M3.6 25v-4.6c0-4 3.2-6.6 6.8-6.6h6.2c3.6 0 6.8 2.6 6.8 6.6v2.2c0 1.4-1 2.4-2.4 2.4z"/><circle cx="13.5" cy="9" r="5.9"/></g></svg>
<div class="t" style="left:555.8px;top:1370.2px;font-size:21.06px;color:#3470ad;font-weight:400;transform:scaleX(0.8407);transform-origin:0 0;">Гость 1</div>
<div class="t" style="left:896.6px;top:1371.1px;font-size:21.17px;color:#2164b4;font-weight:400;letter-spacing:0.6pxtransform:scaleX(0.9259);transform-origin:0 0;">Фокусники</div>
<div class="b" style="left:896.6px;top:1390.6px;width:101.0px;height:1.3px;background:#2a6cc0"></div>
<div class="t" style="left:1109.7px;top:1370.1px;font-size:21.17px;color:#3a3a3a;font-weight:400;transform:scaleX(0.9259);transform-origin:0 0;">05.12.2025</div>
<div class="t" style="left:1229.6px;top:1370.1px;font-size:21.17px;color:#3a3a3a;font-weight:400;transform:scaleX(0.9259);transform-origin:0 0;">13.01.2026</div>
<div class="b" style="left:1347.0px;top:1371.0px;width:9.0px;height:18.0px;background:#dd7424;border-radius:3px"></div>
<div class="t" style="left:1359.0px;top:1370.1px;font-size:21.17px;color:#111;font-weight:400;transform:scaleX(0.8329);transform-origin:0 0;">STT</div>
<div class="t" style="left:1481.5px;top:1370.1px;font-size:21.17px;color:#000;font-weight:400;transform:scaleX(0.9259);transform-origin:0 0;">217</div>
<div class="t" style="left:1574.0px;top:1369.5px;font-size:21.82px;color:#444;font-weight:400;transform:scaleX(0.9259);transform-origin:0 0;">2 взр.</div>
<div class="t" style="left:1625.0px;width:200px;text-align:right;top:1369.8px;font-size:21.49px;color:#333;font-weight:400;transform:scaleX(0.9259);transform-origin:100% 0;">280 800 ₽</div>
<div class="t" style="left:1853.0px;width:100px;text-align:right;top:1370.1px;font-size:21.17px;color:#333;font-weight:400;transform:scaleX(0.9259);transform-origin:100% 0;">0 ₽</div>
<div class="b" style="left:1963.0px;top:1371.0px;width:9.0px;height:18.0px;background:#f5ec00;border-radius:3px"></div>
<div class="t" style="left:1975.5px;top:1370.1px;font-size:21.17px;color:#111;font-weight:400;transform:scaleX(0.7822);transform-origin:0 0;">RACK</div>
<div class="t" style="left:2093.0px;top:1369.8px;font-size:21.49px;color:#444;font-weight:400;transform:scaleX(0.9356);transform-origin:0 0;">39 но...</div>
<div class="t" style="left:2183.3px;top:1370.1px;font-size:21.17px;color:#333;font-weight:400;transform:scaleX(0.8605);transform-origin:0 0;">FB, ОБЕД</div>
<div class="t" style="left:2559.5px;top:1370.1px;font-size:21.17px;color:#3a3a3a;font-weight:400;transform:scaleX(0.9259);transform-origin:0 0;">Грязн...</div>
<div class="b" style="left:2647.0px;top:1365.5px;width:141.0px;height:30.5px;background:#a0dfb7;border:2px solid #68d08f;border-radius:3px;box-sizing:border-box"></div>
<div class="t" style="left:2658.6px;top:1369.9px;font-size:21.38px;color:#567a66;font-weight:400;transform:scaleX(0.9259);transform-origin:0 0;">Проживание</div>
<div class="b" style="left:367.5px;top:1412.5px;width:21.0px;height:21.0px;background:#fff;border:1.6px solid #c2c2c2;box-sizing:border-box"></div>
<div class="t" style="left:409.5px;top:1411.5px;font-size:21.82px;color:#2c6aad;font-weight:400;transform:scaleX(0.9259);transform-origin:0 0;">1217932</div>
<div class="t" style="left:555.8px;top:1412.1px;font-size:21.17px;color:#3470ad;font-weight:400;transform:scaleX(0.9259);transform-origin:0 0;">Плющенко Никита</div>
<div class="t" style="left:1109.7px;top:1412.1px;font-size:21.17px;color:#3a3a3a;font-weight:400;transform:scaleX(0.9259);transform-origin:0 0;">01.12.2025</div>
<div class="t" style="left:1229.6px;top:1412.1px;font-size:21.17px;color:#3a3a3a;font-weight:400;transform:scaleX(0.9259);transform-origin:0 0;">28.01.2026</div>
<div class="b" style="left:1347.0px;top:1413.0px;width:9.0px;height:18.0px;background:#1b6479;border-radius:3px"></div>
<div class="t" style="left:1359.0px;top:1412.1px;font-size:21.17px;color:#111;font-weight:400;transform:scaleX(0.8499);transform-origin:0 0;">APART 2K</div>
<div class="t" style="left:1481.5px;top:1412.1px;font-size:21.17px;color:#000;font-weight:400;transform:scaleX(0.9259);transform-origin:0 0;">203</div>
<div class="t" style="left:1574.0px;top:1411.5px;font-size:21.82px;color:#444;font-weight:400;transform:scaleX(0.9259);transform-origin:0 0;">1 взр.</div>
<div class="t" style="left:1625.0px;width:200px;text-align:right;top:1411.8px;font-size:21.49px;color:#333;font-weight:400;transform:scaleX(0.9259);transform-origin:100% 0;">990 800 ₽</div>
<div class="t" style="left:1853.0px;width:100px;text-align:right;top:1412.1px;font-size:21.17px;color:#333;font-weight:400;transform:scaleX(0.9259);transform-origin:100% 0;">0 ₽</div>
<div class="b" style="left:1963.0px;top:1413.0px;width:9.0px;height:18.0px;background:#f5ec00;border-radius:3px"></div>
<div class="t" style="left:1975.5px;top:1412.1px;font-size:21.17px;color:#111;font-weight:400;transform:scaleX(0.7822);transform-origin:0 0;">RACK</div>
<div class="t" style="left:2093.0px;top:1411.8px;font-size:21.49px;color:#444;font-weight:400;transform:scaleX(0.9356);transform-origin:0 0;">58 но...</div>
<div class="t" style="left:2183.3px;top:1412.1px;font-size:21.17px;color:#333;font-weight:400;transform:scaleX(0.8605);transform-origin:0 0;">FB, ОБЕД</div>
<div class="t" style="left:2559.5px;top:1412.1px;font-size:21.17px;color:#3a3a3a;font-weight:400;transform:scaleX(0.9259);transform-origin:0 0;">Занят</div>
<div class="b" style="left:2647.0px;top:1407.5px;width:141.0px;height:30.5px;background:#a8ebc0;border:2px solid #68d08f;border-radius:3px;box-sizing:border-box"></div>
<div class="t" style="left:2658.6px;top:1411.9px;font-size:21.38px;color:#567a66;font-weight:400;transform:scaleX(0.9259);transform-origin:0 0;">Проживание</div>
<svg class="b" style="left:2829.0px;top:400.0px" width="9" height="5" viewBox="0 0 9 5"><path d="M0 5L4.5 0 9 5z" fill="#777"/></svg>
<div class="b" style="left:2831.0px;top:808.0px;width:6.0px;height:618.0px;background:#d3d3d3"></div>
<svg class="b" style="left:2829.0px;top:1432.0px" width="9" height="5" viewBox="0 0 9 5"><path d="M0 0L4.5 5 9 0z" fill="#777"/></svg>
<div class="b" style="left:354.0px;top:1444.0px;width:189.0px;height:1.0px;background:#c8c8c8"></div>
<svg class="b" style="left:554.0px;top:1452.0px" width="6" height="10" viewBox="0 0 6 10"><path d="M6 0L0 5l6 5z" fill="#777"/></svg>
<div class="b" style="left:566.0px;top:1454.0px;width:1742.0px;height:5.0px;background:#d3d3d3;border-radius:2px"></div>
<svg class="b" style="left:2807.0px;top:1451.0px" width="8" height="12" viewBox="0 0 8 12"><path d="M1 1l6 5-6 5z" fill="#777"/></svg>
<div class="b" style="left:2821.0px;top:1444.0px;width:26.0px;height:25.0px;border-left:1px solid #d0d0d0;border-top:1px solid #d0d0d0;box-sizing:border-box"></div>
<div class="b" style="left:352.0px;top:1470.0px;width:2496.0px;height:2.0px;background:#c2c2c2"></div>
<div class="b" style="left:352.0px;top:1472.0px;width:2.0px;height:62.0px;background:#c0c0c0"></div>
<div class="b" style="left:2847.0px;top:1472.0px;width:1.0px;height:62.0px;background:#b8b8b8"></div>
<div class="b" style="left:352.0px;top:1533.0px;width:2496.0px;height:1.5px;background:#c0c0c0"></div>
<div class="t" style="left:383.3px;top:1491.4px;font-size:21.92px;color:#3c3c3c;font-weight:400;transform:scaleX(0.9259);transform-origin:0 0;">Броней: 24,Комнат: 24</div>
<div class="t" style="left:2416.5px;width:400px;text-align:right;top:1491.1px;font-size:22.36px;color:#3c3c3c;font-weight:400;transform:scaleX(0.9259);transform-origin:100% 0;">К-во гостей: 41 взр.</div>
<div class="b" style="left:0.0px;top:1568.0px;width:2869.0px;height:51.0px;background:#717171"></div>
<div class="b" style="left:16.0px;top:1572.0px;width:211.0px;height:42.0px;background:#fff;border:2px solid #e0e0e0;border-radius:6px;box-sizing:border-box"></div>
<svg class="b" style="left:42.0px;top:1583.0px" width="22" height="22" viewBox="0 0 22 22"><circle cx="11" cy="11" r="10.5" fill="#555"/><path d="M7.6 8.4a3.4 3.4 0 1 1 4.6 3.2c-.9.4-1.2.9-1.2 1.8v.6" fill="none" stroke="#fff" stroke-width="2.4"/><circle cx="11" cy="17" r="1.5" fill="#fff"/></svg>
<div class="t" style="left:70.0px;top:1582.2px;font-size:23.44px;color:#555;font-weight:400;transform:scaleX(0.9259);transform-origin:0 0;">Справка (F1)</div>
<div class="t" style="left:2372.0px;width:300px;text-align:right;top:1582.7px;font-size:21.60px;color:#e6e6e6;font-weight:400;transform:scaleX(0.9259);transform-origin:100% 0;">Tesla Hotel</div>
<div class="t" style="left:2543.5px;width:300px;text-align:right;top:1583.1px;font-size:21.17px;color:#fff;font-weight:700;transform:scaleX(0.9259);transform-origin:100% 0;">13 января 2026 г.</div>
</body></html>
